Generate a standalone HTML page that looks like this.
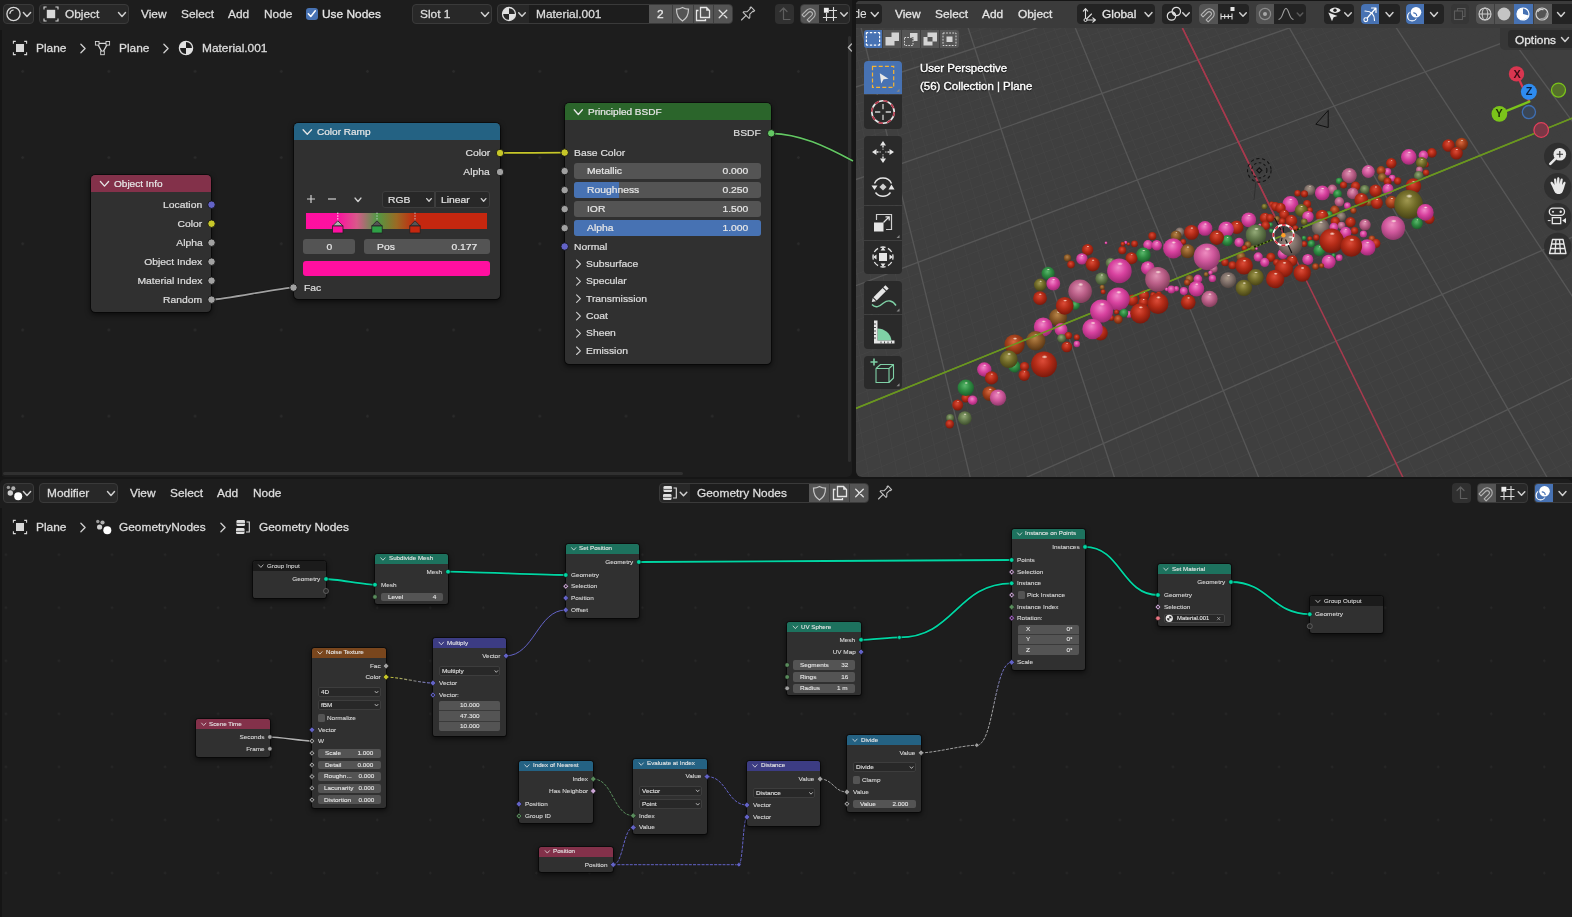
<!DOCTYPE html><html><head><meta charset="utf-8"><title>Blender</title><style>
*{box-sizing:border-box;margin:0;padding:0}
html,body{width:1572px;height:917px;overflow:hidden;background:#161616}
body{font-family:"Liberation Sans",sans-serif;font-size:12px;color:#e0e0e0;position:relative}
.abs{position:absolute}
.t{position:absolute;white-space:nowrap;line-height:1}
.btn{position:absolute;background:#282828;border:1px solid #3a3a3a;border-radius:4px}
.btnv{position:absolute;background:#1d1d1d;border-radius:4px}
.node{position:absolute;background:#303030;border-radius:4px;box-shadow:0 2px 5px 1px rgba(0,0,0,.55), 0 0 0 1px rgba(0,0,0,.45)}
.nh{position:absolute;left:0;top:0;right:0;border-radius:4px 4px 0 0}
.fld{position:absolute;background:#545454;border-radius:3px;overflow:hidden}
.dd{position:absolute;background:#282828;border:1px solid #3d3d3d;border-radius:3px}
svg{position:absolute;overflow:visible}
</style></head><body><div id="w" style="position:absolute;left:0;top:0;width:1572px;height:917px;will-change:transform">
<div class="abs" style="left:0.0px;top:0.0px;width:852.0px;height:477.0px;background:#1d1d1d;border-radius:0 0 5px 5px"></div>
<div class="abs" style="left:0.0px;top:479.0px;width:1572.0px;height:438.0px;background:#1d1d1d;border-radius:5px 5px 0 0"></div>
<div class="abs" style="left:0px;top:28px;width:847px;height:442px;background-image:radial-gradient(circle at 1.5px 1.5px,#2a2a2a 1.0px,transparent 1.6px);background-size:86.2px 86.2px;background-position:107.4px 128.1px"></div>
<div class="abs" style="left:0.0px;top:30.0px;width:1.5px;height:447.0px;background:#151515;"></div>
<div class="abs" style="left:848.0px;top:36.0px;width:3.0px;height:426.0px;background:#2e2e2e;border-radius:2px"></div>
<div class="abs" style="left:3.0px;top:472.0px;width:680.0px;height:3.0px;background:#303030;border-radius:2px"></div>
<div class="abs" style="left:2.5px;top:4.3px;width:31.5px;height:19.3px;background:#282828;border:1px solid #3a3a3a;border-radius:4px"></div>
<svg style="left:0;top:0" width="1" height="1"><circle cx="13.5" cy="14" r="6.6" fill="none" stroke="#d8d8d8" stroke-width="1.3"/><path d="M9.9 13.3 A4.0 4.0 0 0 1 13.2 10.0" fill="none" stroke="#d8d8d8" stroke-width="1.2" stroke-linecap="round"/></svg>
<svg style="left:0;top:0" width="1" height="1"><path d="M23.4 12.5 L27.0 16.5 L30.6 12.5" fill="none" stroke="#d0d0d0" stroke-width="1.45" stroke-linecap="round" stroke-linejoin="round"/></svg>
<div class="abs" style="left:39.0px;top:4.3px;width:90.0px;height:19.3px;background:#282828;border:1px solid #3a3a3a;border-radius:4px"></div>
<svg style="left:0;top:0" width="1" height="1"><path d="M44.0 9.6 L44.0 7.0 L46.6 7.0 M44.0 18.4 L44.0 21.0 L46.6 21.0 M58.0 9.6 L58.0 7.0 L55.4 7.0 M58.0 18.4 L58.0 21.0 L55.4 21.0 " fill="none" stroke="#d8d8d8" stroke-width="1.1"/><rect x="46.8" y="9.8" width="8.4" height="8.4" fill="#d8d8d8"/></svg>
<div class="t" style="left:65.0px;top:9.07px;font-size:10.71px;color:#dddddd;-webkit-text-stroke:0.27px;transform:scaleX(1.111);transform-origin:left center;">Object</div>
<svg style="left:0;top:0" width="1" height="1"><path d="M118.5 12.5 L122.0 16.5 L125.5 12.5" fill="none" stroke="#d0d0d0" stroke-width="1.45" stroke-linecap="round" stroke-linejoin="round"/></svg>
<div class="t" style="left:141.0px;top:9.07px;font-size:10.71px;color:#dddddd;-webkit-text-stroke:0.27px;transform:scaleX(1.111);transform-origin:left center;">View</div>
<div class="t" style="left:181.0px;top:9.07px;font-size:10.71px;color:#dddddd;-webkit-text-stroke:0.27px;transform:scaleX(1.111);transform-origin:left center;">Select</div>
<div class="t" style="left:228.0px;top:9.07px;font-size:10.71px;color:#dddddd;-webkit-text-stroke:0.27px;transform:scaleX(1.111);transform-origin:left center;">Add</div>
<div class="t" style="left:264.0px;top:9.07px;font-size:10.71px;color:#dddddd;-webkit-text-stroke:0.27px;transform:scaleX(1.111);transform-origin:left center;">Node</div>
<div class="abs" style="left:305.5px;top:7.5px;width:12.5px;height:12.5px;background:#4772b3;border-radius:3px"></div>
<svg style="left:0;top:0" width="1" height="1"><path d="M308.3 13.8 L310.8 16.5 L315.3 10.8" fill="none" stroke="#fff" stroke-width="1.5" stroke-linecap="round" stroke-linejoin="round"/></svg>
<div class="t" style="left:322.0px;top:9.07px;font-size:10.71px;color:#e6e6e6;-webkit-text-stroke:0.27px;transform:scaleX(1.111);transform-origin:left center;">Use Nodes</div>
<div class="abs" style="left:412.0px;top:4.3px;width:80.0px;height:19.3px;background:#282828;border:1px solid #3a3a3a;border-radius:4px"></div>
<div class="t" style="left:420.0px;top:9.07px;font-size:10.71px;color:#dddddd;-webkit-text-stroke:0.27px;transform:scaleX(1.111);transform-origin:left center;">Slot 1</div>
<svg style="left:0;top:0" width="1" height="1"><path d="M481.4 12.5 L485.0 16.5 L488.6 12.5" fill="none" stroke="#d0d0d0" stroke-width="1.45" stroke-linecap="round" stroke-linejoin="round"/></svg>
<div class="abs" style="left:497.0px;top:4.3px;width:236.0px;height:19.3px;background:#282828;border:1px solid #3a3a3a;border-radius:4px"></div>
<svg style="left:0;top:0" width="1" height="1"><circle cx="509" cy="14" r="6.5" fill="#282828" stroke="#e0e0e0" stroke-width="1.3"/><path d="M509 14 L509 7.5 A6.5 6.5 0 0 0 502.5 14 Z" fill="#e0e0e0"/><path d="M509 14 L509 20.5 A6.5 6.5 0 0 0 515.5 14 Z" fill="#e0e0e0"/></svg>
<svg style="left:0;top:0" width="1" height="1"><path d="M518.7 12.7 L522.0 16.3 L525.3 12.7" fill="none" stroke="#d0d0d0" stroke-width="1.45" stroke-linecap="round" stroke-linejoin="round"/></svg>
<div class="abs" style="left:529.0px;top:5.3px;width:120.0px;height:17.3px;background:#1d1d1d;"></div>
<div class="t" style="left:536.0px;top:9.07px;font-size:10.71px;color:#dddddd;-webkit-text-stroke:0.27px;transform:scaleX(1.111);transform-origin:left center;">Material.001</div>
<div class="abs" style="left:649.0px;top:5.3px;width:83.0px;height:17.3px;background:#545454;border-radius:0 3px 3px 0"></div>
<div class="abs" style="left:672.0px;top:5.3px;width:1.0px;height:17.3px;background:#3e3e3e;"></div>
<div class="abs" style="left:692.5px;top:5.3px;width:1.0px;height:17.3px;background:#3e3e3e;"></div>
<div class="abs" style="left:712.5px;top:5.3px;width:1.0px;height:17.3px;background:#3e3e3e;"></div>
<div class="t" style="left:656.5px;top:9.07px;font-size:10.71px;color:#e6e6e6;-webkit-text-stroke:0.27px;transform:scaleX(1.111);transform-origin:left center;">2</div>
<svg style="left:0;top:0" width="1" height="1"><path d="M682.5 7.5 C685.0 9 687.0 9.2 688.5 9.2 C688.5 15 686.5 18.5 682.5 21 C678.5 18.5 676.5 15 676.5 9.2 C678.0 9.2 680.0 9 682.5 7.5 Z" fill="none" stroke="#c8c8c8" stroke-width="1.2"/></svg>
<svg style="left:0;top:0" width="1" height="1"><path d="M700.5 7.5 L706.5 7.5 L709.5 10.5 L709.5 17.5 L700.5 17.5 Z" fill="none" stroke="#e6e6e6" stroke-width="1.3"/><path d="M706.2 7.5 L706.2 10.8 L709.5 10.8 Z" fill="#e6e6e6"/><path d="M698.5 10.5 L696.5 10.5 L696.5 20.5 L705.5 20.5 L705.5 19" fill="none" stroke="#e6e6e6" stroke-width="1.3"/></svg>
<svg style="left:0;top:0" width="1" height="1"><path d="M719.2 10.2 L726.8 17.8 M726.8 10.2 L719.2 17.8" stroke="#e0e0e0" stroke-width="1.3" stroke-linecap="round"/></svg>
<svg style="left:0;top:0" width="1" height="1"><g transform="translate(747.5 14) rotate(45)"><path d="M-2.6 -7.5 L2.6 -7.5 L2.6 -6 L1.8 -6 L1.8 -1.5 L4.2 1 L4.2 2 L-4.2 2 L-4.2 1 L-1.8 -1.5 L-1.8 -6 L-2.6 -6 Z" fill="none" stroke="#c0c0c0" stroke-width="1.1" stroke-linejoin="round"/><path d="M0 2 L0 8.5" stroke="#c0c0c0" stroke-width="1.1" stroke-linecap="round"/></g></svg>
<div class="abs" style="left:774.5px;top:4.3px;width:19.5px;height:19.3px;background:#303030;border-radius:4px"></div>
<svg style="left:0;top:0" width="1" height="1"><path d="M780 11.5 L783.5 8 L787 11.5 M783.5 8 L783.5 19.5 L790 19.5" fill="none" stroke="#5e5e5e" stroke-width="1.2" stroke-linecap="round" stroke-linejoin="round"/></svg>
<div class="abs" style="left:799.5px;top:4.3px;width:50.5px;height:19.3px;background:#282828;border:1px solid #3a3a3a;border-radius:4px"></div>
<div class="abs" style="left:800.5px;top:5.3px;width:18.5px;height:17.3px;background:#545454;border-radius:3px 0 0 3px"></div>
<svg style="left:0;top:0" width="1" height="1"><g transform="translate(809.5 14.5) rotate(45)"><path d="M-5 5.5 L-5 -1 A5 5 0 0 1 5 -1 L5 5.5 L2.2 5.5 L2.2 -1 A2.2 2.2 0 0 0 -2.2 -1 L-2.2 5.5 Z" fill="none" stroke="#b4b4b4" stroke-width="1.1" stroke-linejoin="round"/></g></svg>
<svg style="left:0;top:0" width="1" height="1"><path d="M826.5 13.0 L826.5 21.0 M833.5 6.9 L833.5 21.0 M829 10.5 L837 10.5 M822.9 17.5 L837 17.5" stroke="#dcdcdc" stroke-width="1.1"/><rect x="823.9" y="7.8" width="4.9" height="4.9" fill="#ececec"/></svg>
<svg style="left:0;top:0" width="1" height="1"><path d="M840.7 12.7 L844.0 16.3 L847.3 12.7" fill="none" stroke="#d0d0d0" stroke-width="1.45" stroke-linecap="round" stroke-linejoin="round"/></svg>
<svg style="left:0;top:0" width="1" height="1"><path d="M13.4 43.8 L13.4 41.4 L15.8 41.4 M13.4 52.2 L13.4 54.6 L15.8 54.6 M26.6 43.8 L26.6 41.4 L24.2 41.4 M26.6 52.2 L26.6 54.6 L24.2 54.6 " fill="none" stroke="#d8d8d8" stroke-width="1.1"/><rect x="16.0" y="44.0" width="8.0" height="8.0" fill="#d8d8d8"/></svg>
<div class="t" style="left:36.0px;top:42.97px;font-size:10.71px;color:#dddddd;-webkit-text-stroke:0.27px;transform:scaleX(1.111);transform-origin:left center;">Plane</div>
<svg style="left:0;top:0" width="1" height="1"><path d="M80.9 44.2 L85.1 48.5 L80.9 52.8" fill="none" stroke="#d0d0d0" stroke-width="1.3" stroke-linecap="round" stroke-linejoin="round"/></svg>
<svg style="left:0;top:0" width="1" height="1"><path d="M97.2 43.3 L107.8 43.3 L102.5 52.9 Z" fill="none" stroke="#d8d8d8" stroke-width="1.2"/><rect x="95.4" y="41.5" width="3.6" height="3.6" fill="#1d1d1d" stroke="#d8d8d8" stroke-width="0.9"/><rect x="106.0" y="41.5" width="3.6" height="3.6" fill="#1d1d1d" stroke="#d8d8d8" stroke-width="0.9"/><rect x="100.7" y="51.1" width="3.6" height="3.6" fill="#1d1d1d" stroke="#d8d8d8" stroke-width="0.9"/></svg>
<div class="t" style="left:119.0px;top:42.97px;font-size:10.71px;color:#dddddd;-webkit-text-stroke:0.27px;transform:scaleX(1.111);transform-origin:left center;">Plane</div>
<svg style="left:0;top:0" width="1" height="1"><path d="M163.9 44.2 L168.1 48.5 L163.9 52.8" fill="none" stroke="#d0d0d0" stroke-width="1.3" stroke-linecap="round" stroke-linejoin="round"/></svg>
<svg style="left:0;top:0" width="1" height="1"><circle cx="186" cy="48" r="6.6" fill="#1d1d1d" stroke="#e0e0e0" stroke-width="1.3"/><path d="M186 48 L186 41.4 A6.6 6.6 0 0 0 179.4 48 Z" fill="#e0e0e0"/><path d="M186 48 L186 54.6 A6.6 6.6 0 0 0 192.6 48 Z" fill="#e0e0e0"/></svg>
<div class="t" style="left:202.0px;top:42.97px;font-size:10.71px;color:#dddddd;-webkit-text-stroke:0.27px;transform:scaleX(1.111);transform-origin:left center;">Material.001</div>
<svg style="left:0;top:0" width="1" height="1"><path d="M851.5 44 L848.3 47.5 L851.5 51" fill="none" stroke="#b8b8b8" stroke-width="1.2" stroke-linecap="round" stroke-linejoin="round"/></svg>
<svg style="left:0;top:0" width="1" height="1"><path d="M211.5 299.6 C223.5 299.6 281.5 287.6 293.5 287.6" fill="none" stroke="#111" stroke-width="3.0999999999999996" opacity="0.55"/><path d="M211.5 299.6 C223.5 299.6 281.5 287.6 293.5 287.6" fill="none" stroke="#a1a1a1" stroke-width="1.7"/></svg>
<svg style="left:0;top:0" width="1" height="1"><path d="M500.0 153.0 C510.0 153.0 555.0 152.6 565.0 152.6" fill="none" stroke="#111" stroke-width="3.0999999999999996" opacity="0.55"/><path d="M500.0 153.0 C510.0 153.0 555.0 152.6 565.0 152.6" fill="none" stroke="#c7c729" stroke-width="1.7"/></svg>
<svg style="left:0;top:0" width="1" height="1"><path d="M771.3 133.3 C800 134 825 146 853 161" fill="none" stroke="#111" stroke-width="3" opacity=".5"/><path d="M771.3 133.3 C800 134 825 146 853 161" fill="none" stroke="#63c763" stroke-width="1.7"/></svg>
<div class="node" style="left:91.0px;top:175.0px;width:120.0px;height:137.0px;border-radius:4.2px"><div class="nh" style="height:17.0px;background:#83314a;border-radius:4.2px 4.2px 0 0"></div></div>
<svg style="left:0;top:0" width="1" height="1"><path d="M100.4 181.5 L104.5 186.1 L108.6 181.5" fill="none" stroke="#e6e6e6" stroke-width="1.3" stroke-linecap="round" stroke-linejoin="round"/></svg>
<div class="t" style="left:114.0px;top:179.79px;font-size:9.04px;color:#e6e6e6;-webkit-text-stroke:0.21px;transform:scaleX(1.111);transform-origin:left center;">Object Info</div>
<div class="t" style="right:1369.7px;top:200.85px;font-size:9.31px;color:#dddddd;-webkit-text-stroke:0.22px;transform:scaleX(1.111);transform-origin:right center;">Location</div>
<svg style="left:0;top:0" width="1" height="1"><circle cx="211.5" cy="204.7" r="3.75" fill="#6363c7" stroke="#141414" stroke-width="0.9"/></svg>
<div class="t" style="right:1369.7px;top:219.85px;font-size:9.31px;color:#dddddd;-webkit-text-stroke:0.22px;transform:scaleX(1.111);transform-origin:right center;">Color</div>
<svg style="left:0;top:0" width="1" height="1"><circle cx="211.5" cy="223.7" r="3.75" fill="#c7c729" stroke="#141414" stroke-width="0.9"/></svg>
<div class="t" style="right:1369.7px;top:238.85px;font-size:9.31px;color:#dddddd;-webkit-text-stroke:0.22px;transform:scaleX(1.111);transform-origin:right center;">Alpha</div>
<svg style="left:0;top:0" width="1" height="1"><circle cx="211.5" cy="242.7" r="3.75" fill="#a1a1a1" stroke="#141414" stroke-width="0.9"/></svg>
<div class="t" style="right:1369.7px;top:257.85px;font-size:9.31px;color:#dddddd;-webkit-text-stroke:0.22px;transform:scaleX(1.111);transform-origin:right center;">Object Index</div>
<svg style="left:0;top:0" width="1" height="1"><circle cx="211.5" cy="261.7" r="3.75" fill="#a1a1a1" stroke="#141414" stroke-width="0.9"/></svg>
<div class="t" style="right:1369.7px;top:276.85px;font-size:9.31px;color:#dddddd;-webkit-text-stroke:0.22px;transform:scaleX(1.111);transform-origin:right center;">Material Index</div>
<svg style="left:0;top:0" width="1" height="1"><circle cx="211.5" cy="280.7" r="3.75" fill="#a1a1a1" stroke="#141414" stroke-width="0.9"/></svg>
<div class="t" style="right:1369.7px;top:295.85px;font-size:9.31px;color:#dddddd;-webkit-text-stroke:0.22px;transform:scaleX(1.111);transform-origin:right center;">Random</div>
<svg style="left:0;top:0" width="1" height="1"><circle cx="211.5" cy="299.7" r="3.75" fill="#a1a1a1" stroke="#141414" stroke-width="0.9"/></svg>
<div class="node" style="left:293.5px;top:123.0px;width:206.5px;height:176.3px;border-radius:4.3px"><div class="nh" style="height:17.4px;background:#246283;border-radius:4.3px 4.3px 0 0"></div></div>
<svg style="left:0;top:0" width="1" height="1"><path d="M303.1 129.7 L307.3 134.3 L311.5 129.7" fill="none" stroke="#e6e6e6" stroke-width="1.3305882352941176" stroke-linecap="round" stroke-linejoin="round"/></svg>
<div class="t" style="left:317.0px;top:127.99px;font-size:9.04px;color:#e6e6e6;-webkit-text-stroke:0.21px;transform:scaleX(1.111);transform-origin:left center;">Color Ramp</div>
<div class="t" style="right:1082.0px;top:149.15px;font-size:9.31px;color:#dddddd;-webkit-text-stroke:0.22px;transform:scaleX(1.111);transform-origin:right center;">Color</div>
<svg style="left:0;top:0" width="1" height="1"><circle cx="500.0" cy="153.0" r="3.75" fill="#c7c729" stroke="#141414" stroke-width="0.9"/></svg>
<div class="t" style="right:1082.0px;top:168.15px;font-size:9.31px;color:#dddddd;-webkit-text-stroke:0.22px;transform:scaleX(1.111);transform-origin:right center;">Alpha</div>
<svg style="left:0;top:0" width="1" height="1"><circle cx="500.0" cy="172.0" r="3.75" fill="#a1a1a1" stroke="#141414" stroke-width="0.9"/></svg>
<svg style="left:0;top:0" width="1" height="1"><path d="M307 199 L315 199 M311 195 L311 203" stroke="#d0d0d0" stroke-width="1.2"/><path d="M328 199 L336 199" stroke="#d0d0d0" stroke-width="1.2"/></svg>
<svg style="left:0;top:0" width="1" height="1"><path d="M355.1 198.1 L358.0 201.5 L360.9 198.1" fill="none" stroke="#d0d0d0" stroke-width="1.45" stroke-linecap="round" stroke-linejoin="round"/></svg>
<div class="dd" style="left:381.7px;top:191.0px;width:53.7px;height:17.0px;border-radius:3px;border-radius:3px 0 0 3px"></div>
<div class="t" style="left:387.7px;top:195.65px;font-size:9.31px;color:#e0e0e0;-webkit-text-stroke:0.22px;transform:scaleX(1.111);transform-origin:left center;">RGB</div>
<svg style="left:0;top:0" width="1" height="1"><path d="M426.7 198.6 L429.0 201.2 L431.3 198.6" fill="none" stroke="#d0d0d0" stroke-width="1.3307142857142857" stroke-linecap="round" stroke-linejoin="round"/></svg>
<div class="dd" style="left:434.9px;top:191.0px;width:55.1px;height:17.0px;border-radius:3px;border-radius:0 3px 3px 0"></div>
<div class="t" style="left:440.9px;top:195.65px;font-size:9.31px;color:#e0e0e0;-webkit-text-stroke:0.22px;transform:scaleX(1.111);transform-origin:left center;">Linear</div>
<svg style="left:0;top:0" width="1" height="1"><path d="M481.3 198.6 L483.6 201.2 L485.9 198.6" fill="none" stroke="#d0d0d0" stroke-width="1.3307142857142857" stroke-linecap="round" stroke-linejoin="round"/></svg>
<div class="abs" style="left:305.6px;top:212.6px;width:181.9px;height:16.4px;background:linear-gradient(90deg,#ff0fa0 0%,#fd11a0 17.7%,#d9588a 28%,#4f9a44 39.3%,#9a6a24 50%,#c5270f 60.2%,#c5270f 100%)"></div>
<svg style="left:0;top:0" width="1" height="1"><path d="M337.8 212.6 L337.8 221" stroke="#fff" stroke-width="0.9" stroke-dasharray="1.5 1.2"/><path d="M332.6 226 L337.8 220.8 L343.0 226 Z" fill="#b0b0b0" stroke="#222" stroke-width="0.8"/><rect x="332.6" y="226" width="10.4" height="7" fill="#ff10a0" stroke="#222" stroke-width="0.8"/></svg>
<svg style="left:0;top:0" width="1" height="1"><path d="M377 212.6 L377 221" stroke="#ccc" stroke-width="0.9" stroke-dasharray="1.5 1.2"/><path d="M371.8 226 L377 220.8 L382.2 226 Z" fill="#555" stroke="#222" stroke-width="0.8"/><rect x="371.8" y="226" width="10.4" height="7" fill="#2fa046" stroke="#222" stroke-width="0.8"/></svg>
<svg style="left:0;top:0" width="1" height="1"><path d="M415 212.6 L415 221" stroke="#ccc" stroke-width="0.9" stroke-dasharray="1.5 1.2"/><path d="M409.8 226 L415 220.8 L420.2 226 Z" fill="#555" stroke="#222" stroke-width="0.8"/><rect x="409.8" y="226" width="10.4" height="7" fill="#c5270f" stroke="#222" stroke-width="0.8"/></svg>
<div class="fld" style="left:302.8px;top:239.0px;width:52.6px;height:15.0px;border-radius:3px"></div>
<div class="t" style="left:302.8px;width:52.6px;text-align:center;top:242.65px;font-size:9.31px;color:#e6e6e6;-webkit-text-stroke:0.22px;transform:scaleX(1.111);transform-origin:center center">0</div>
<div class="fld" style="left:363.5px;top:239.0px;width:126.8px;height:15.0px;border-radius:3px"></div>
<div class="t" style="left:376.5px;top:242.65px;font-size:9.31px;color:#e6e6e6;-webkit-text-stroke:0.22px;transform:scaleX(1.111);transform-origin:left center;">Pos</div>
<div class="t" style="right:1094.7px;top:242.65px;font-size:9.31px;color:#e6e6e6;-webkit-text-stroke:0.22px;transform:scaleX(1.111);transform-origin:right center;">0.177</div>
<div class="abs" style="left:302.8px;top:260.7px;width:187.5px;height:15.1px;background:#ff0fa0;border-radius:3px"></div>
<div class="t" style="left:303.5px;top:283.75px;font-size:9.31px;color:#dddddd;-webkit-text-stroke:0.22px;transform:scaleX(1.111);transform-origin:left center;">Fac</div>
<svg style="left:0;top:0" width="1" height="1"><circle cx="293.5" cy="287.6" r="3.75" fill="#a1a1a1" stroke="#141414" stroke-width="0.9"/></svg>
<div class="node" style="left:564.7px;top:103.3px;width:206.4px;height:260.5px;border-radius:4.3px"><div class="nh" style="height:17.1px;background:#2b652b;border-radius:4.3px 4.3px 0 0"></div></div>
<svg style="left:0;top:0" width="1" height="1"><path d="M574.2 109.8 L578.3 114.5 L582.4 109.8" fill="none" stroke="#e6e6e6" stroke-width="1.3076470588235294" stroke-linecap="round" stroke-linejoin="round"/></svg>
<div class="t" style="left:587.8px;top:108.14px;font-size:9.04px;color:#e6e6e6;-webkit-text-stroke:0.21px;transform:scaleX(1.111);transform-origin:left center;">Principled BSDF</div>
<div class="t" style="right:811.0px;top:129.45px;font-size:9.31px;color:#dddddd;-webkit-text-stroke:0.22px;transform:scaleX(1.111);transform-origin:right center;">BSDF</div>
<svg style="left:0;top:0" width="1" height="1"><circle cx="771.2" cy="133.3" r="3.75" fill="#63c763" stroke="#141414" stroke-width="0.9"/></svg>
<div class="t" style="left:574.0px;top:148.75px;font-size:9.31px;color:#dddddd;-webkit-text-stroke:0.22px;transform:scaleX(1.111);transform-origin:left center;">Base Color</div>
<svg style="left:0;top:0" width="1" height="1"><circle cx="564.7" cy="152.6" r="3.75" fill="#c7c729" stroke="#141414" stroke-width="0.9"/></svg>
<div class="fld" style="left:573.8px;top:163.2px;width:187.2px;height:15.8px;border-radius:3px"></div>
<div class="t" style="left:586.8px;top:167.25px;font-size:9.31px;color:#e6e6e6;-webkit-text-stroke:0.22px;transform:scaleX(1.111);transform-origin:left center;">Metallic</div>
<div class="t" style="right:824.0px;top:167.25px;font-size:9.31px;color:#e6e6e6;-webkit-text-stroke:0.22px;transform:scaleX(1.111);transform-origin:right center;">0.000</div>
<svg style="left:0;top:0" width="1" height="1"><circle cx="564.7" cy="171.1" r="3.75" fill="#a1a1a1" stroke="#141414" stroke-width="0.9"/></svg>
<div class="fld" style="left:573.8px;top:182.2px;width:187.2px;height:15.8px;border-radius:3px"><div class="abs" style="left:0;top:0;bottom:0;width:45.3px;background:#4772b3"></div></div>
<div class="t" style="left:586.8px;top:186.25px;font-size:9.31px;color:#e6e6e6;-webkit-text-stroke:0.22px;transform:scaleX(1.111);transform-origin:left center;">Roughness</div>
<div class="t" style="right:824.0px;top:186.25px;font-size:9.31px;color:#e6e6e6;-webkit-text-stroke:0.22px;transform:scaleX(1.111);transform-origin:right center;">0.250</div>
<svg style="left:0;top:0" width="1" height="1"><circle cx="564.7" cy="190.1" r="3.75" fill="#a1a1a1" stroke="#141414" stroke-width="0.9"/></svg>
<div class="fld" style="left:573.8px;top:201.2px;width:187.2px;height:15.8px;border-radius:3px"></div>
<div class="t" style="left:586.8px;top:205.25px;font-size:9.31px;color:#e6e6e6;-webkit-text-stroke:0.22px;transform:scaleX(1.111);transform-origin:left center;">IOR</div>
<div class="t" style="right:824.0px;top:205.25px;font-size:9.31px;color:#e6e6e6;-webkit-text-stroke:0.22px;transform:scaleX(1.111);transform-origin:right center;">1.500</div>
<svg style="left:0;top:0" width="1" height="1"><circle cx="564.7" cy="209.1" r="3.75" fill="#a1a1a1" stroke="#141414" stroke-width="0.9"/></svg>
<div class="fld" style="left:573.8px;top:220.2px;width:187.2px;height:15.8px;border-radius:3px"><div class="abs" style="left:0;top:0;bottom:0;width:187.2px;background:#4772b3"></div></div>
<div class="t" style="left:586.8px;top:224.25px;font-size:9.31px;color:#e6e6e6;-webkit-text-stroke:0.22px;transform:scaleX(1.111);transform-origin:left center;">Alpha</div>
<div class="t" style="right:824.0px;top:224.25px;font-size:9.31px;color:#e6e6e6;-webkit-text-stroke:0.22px;transform:scaleX(1.111);transform-origin:right center;">1.000</div>
<svg style="left:0;top:0" width="1" height="1"><circle cx="564.7" cy="228.1" r="3.75" fill="#a1a1a1" stroke="#141414" stroke-width="0.9"/></svg>
<div class="t" style="left:574.0px;top:242.65px;font-size:9.31px;color:#dddddd;-webkit-text-stroke:0.22px;transform:scaleX(1.111);transform-origin:left center;">Normal</div>
<svg style="left:0;top:0" width="1" height="1"><circle cx="564.7" cy="246.5" r="3.75" fill="#6363c7" stroke="#141414" stroke-width="0.9"/></svg>
<svg style="left:0;top:0" width="1" height="1"><path d="M576.6 260.2 L580.4 264.0 L576.6 267.8" fill="none" stroke="#d0d0d0" stroke-width="1.1" stroke-linecap="round" stroke-linejoin="round"/></svg>
<div class="t" style="left:586.0px;top:259.85px;font-size:9.31px;color:#dddddd;-webkit-text-stroke:0.22px;transform:scaleX(1.111);transform-origin:left center;">Subsurface</div>
<svg style="left:0;top:0" width="1" height="1"><path d="M576.6 277.6 L580.4 281.4 L576.6 285.1" fill="none" stroke="#d0d0d0" stroke-width="1.1" stroke-linecap="round" stroke-linejoin="round"/></svg>
<div class="t" style="left:586.0px;top:277.20px;font-size:9.31px;color:#dddddd;-webkit-text-stroke:0.22px;transform:scaleX(1.111);transform-origin:left center;">Specular</div>
<svg style="left:0;top:0" width="1" height="1"><path d="M576.6 294.9 L580.4 298.7 L576.6 302.4" fill="none" stroke="#d0d0d0" stroke-width="1.1" stroke-linecap="round" stroke-linejoin="round"/></svg>
<div class="t" style="left:586.0px;top:294.55px;font-size:9.31px;color:#dddddd;-webkit-text-stroke:0.22px;transform:scaleX(1.111);transform-origin:left center;">Transmission</div>
<svg style="left:0;top:0" width="1" height="1"><path d="M576.6 312.3 L580.4 316.1 L576.6 319.8" fill="none" stroke="#d0d0d0" stroke-width="1.1" stroke-linecap="round" stroke-linejoin="round"/></svg>
<div class="t" style="left:586.0px;top:311.90px;font-size:9.31px;color:#dddddd;-webkit-text-stroke:0.22px;transform:scaleX(1.111);transform-origin:left center;">Coat</div>
<svg style="left:0;top:0" width="1" height="1"><path d="M576.6 329.7 L580.4 333.4 L576.6 337.2" fill="none" stroke="#d0d0d0" stroke-width="1.1" stroke-linecap="round" stroke-linejoin="round"/></svg>
<div class="t" style="left:586.0px;top:329.25px;font-size:9.31px;color:#dddddd;-webkit-text-stroke:0.22px;transform:scaleX(1.111);transform-origin:left center;">Sheen</div>
<svg style="left:0;top:0" width="1" height="1"><path d="M576.6 347.0 L580.4 350.8 L576.6 354.5" fill="none" stroke="#d0d0d0" stroke-width="1.1" stroke-linecap="round" stroke-linejoin="round"/></svg>
<div class="t" style="left:586.0px;top:346.60px;font-size:9.31px;color:#dddddd;-webkit-text-stroke:0.22px;transform:scaleX(1.111);transform-origin:left center;">Emission</div>
<div class="abs" style="left:856px;top:1px;width:716px;height:476px;background:#3f3f3f;border-radius:4px 0 0 6px;overflow:hidden">
<svg style="left:0;top:0" width="716" height="476" viewBox="856 1 716 476">
<defs>
<radialGradient id="sr" cx="0.45" cy="0.4" r="0.68" fx="0.45" fy="0.36"><stop offset="0" stop-color="#dc4c38"/><stop offset="0.45" stop-color="#b32b17"/><stop offset="1" stop-color="#6c1509"/></radialGradient>
<radialGradient id="sp" cx="0.45" cy="0.4" r="0.68" fx="0.45" fy="0.36"><stop offset="0" stop-color="#f088c8"/><stop offset="0.45" stop-color="#d8429f"/><stop offset="1" stop-color="#902268"/></radialGradient>
<radialGradient id="sg" cx="0.45" cy="0.4" r="0.68" fx="0.45" fy="0.36"><stop offset="0" stop-color="#5ab86c"/><stop offset="0.45" stop-color="#2f8c42"/><stop offset="1" stop-color="#175426"/></radialGradient>
<radialGradient id="so" cx="0.45" cy="0.4" r="0.68" fx="0.45" fy="0.36"><stop offset="0" stop-color="#b88448"/><stop offset="0.45" stop-color="#8a5a28"/><stop offset="1" stop-color="#4c2e10"/></radialGradient>
<radialGradient id="sk" cx="0.45" cy="0.4" r="0.68" fx="0.45" fy="0.36"><stop offset="0" stop-color="#e094b4"/><stop offset="0.45" stop-color="#bb5f88"/><stop offset="1" stop-color="#74344f"/></radialGradient>
<radialGradient id="sq" cx="0.45" cy="0.4" r="0.68" fx="0.45" fy="0.36"><stop offset="0" stop-color="#ee8cc0"/><stop offset="0.45" stop-color="#d0589c"/><stop offset="1" stop-color="#823060"/></radialGradient>
<radialGradient id="sy" cx="0.45" cy="0.4" r="0.68" fx="0.45" fy="0.36"><stop offset="0" stop-color="#a09850"/><stop offset="0.45" stop-color="#716b28"/><stop offset="1" stop-color="#3e3a12"/></radialGradient>
<radialGradient id="sm" cx="0.45" cy="0.4" r="0.68" fx="0.45" fy="0.36"><stop offset="0" stop-color="#a89888"/><stop offset="0.45" stop-color="#80706a"/><stop offset="1" stop-color="#463c38"/></radialGradient>
<radialGradient id="se" cx="0.45" cy="0.4" r="0.68" fx="0.45" fy="0.36"><stop offset="0" stop-color="#94aa78"/><stop offset="0.45" stop-color="#647a4c"/><stop offset="1" stop-color="#344226"/></radialGradient>
<radialGradient id="sb" cx="0.45" cy="0.4" r="0.68" fx="0.45" fy="0.36"><stop offset="0" stop-color="#d86a40"/><stop offset="0.45" stop-color="#a4401c"/><stop offset="1" stop-color="#5c2008"/></radialGradient>
<radialGradient id="hl" cx="0.5" cy="0.5" r="0.5"><stop offset="0" stop-color="#fff0e0" stop-opacity="0.85"/><stop offset="0.5" stop-color="#fff0e0" stop-opacity="0.5"/><stop offset="1" stop-color="#fff" stop-opacity="0"/></radialGradient>
<linearGradient id="gfade" gradientUnits="userSpaceOnUse" x1="1275" y1="0" x2="1419" y2="-108"><stop offset="0" stop-color="#fff"/><stop offset="1" stop-color="#000"/></linearGradient><mask id="gmask" maskUnits="userSpaceOnUse" x="856" y="0" width="716" height="477"><rect x="856" y="0" width="716" height="477" fill="url(#gfade)"/></mask>
</defs>
<path d="M38.4 -238.2 L-5628.1 11239.0 M26.5 -231.5 L1596.9 -558.4 M47.9 -240.2 L-5524.6 11239.1 M24.2 -226.8 L1600.2 -556.2 M57.3 -242.1 L-5421.1 11239.2 M21.8 -222.0 L1603.5 -554.0 M66.7 -244.1 L-5317.6 11239.4 M19.3 -217.2 L1606.8 -551.7 M76.1 -246.0 L-5214.0 11239.5 M16.9 -212.3 L1610.1 -549.5 M85.4 -247.9 L-5110.5 11239.6 M14.4 -207.4 L1613.5 -547.2 M94.7 -249.9 L-5007.0 11239.7 M11.9 -202.4 L1616.9 -544.9 M104.0 -251.8 L-4903.5 11239.9 M9.4 -197.4 L1620.3 -542.6 M113.2 -253.7 L-4799.9 11240.0 M6.9 -192.4 L1623.7 -540.3 M131.6 -257.5 L-4592.9 11240.2 M1.7 -182.1 L1630.6 -535.7 M140.7 -259.4 L-4489.4 11240.3 M-0.9 -176.9 L1634.1 -533.3 M149.8 -261.3 L-4385.8 11240.5 M-3.5 -171.6 L1637.6 -530.9 M158.9 -263.2 L-4282.3 11240.6 M-6.2 -166.3 L1641.2 -528.5 M167.9 -265.0 L-4178.8 11240.7 M-8.9 -161.0 L1644.7 -526.1 M176.9 -266.9 L-4075.3 11240.8 M-11.6 -155.6 L1648.3 -523.7 M185.8 -268.8 L-3971.8 11240.9 M-14.3 -150.1 L1651.9 -521.3 M194.8 -270.6 L-3868.2 11241.1 M-17.1 -144.6 L1655.5 -518.8 M203.6 -272.5 L-3764.7 11241.2 M-19.9 -139.0 L1659.2 -516.4 M221.3 -276.1 L-3557.7 11241.4 M-25.6 -127.7 L1666.6 -511.4 M230.1 -277.9 L-3454.1 11241.6 M-28.5 -122.0 L1670.3 -508.9 M238.9 -279.8 L-3350.6 11241.7 M-31.4 -116.2 L1674.0 -506.3 M247.6 -281.6 L-3247.1 11241.8 M-34.3 -110.3 L1677.8 -503.8 M256.3 -283.4 L-3143.6 11241.9 M-37.3 -104.4 L1681.6 -501.2 M265.0 -285.2 L-3040.1 11242.0 M-40.3 -98.4 L1685.4 -498.6 M273.6 -287.0 L-2936.5 11242.2 M-43.3 -92.4 L1689.3 -496.0 M282.2 -288.7 L-2833.0 11242.3 M-46.4 -86.3 L1693.2 -493.4 M290.8 -290.5 L-2729.5 11242.4 M-49.5 -80.1 L1697.1 -490.8 M307.8 -294.0 L-2522.4 11242.7 M-55.7 -67.6 L1705.0 -485.5 M316.3 -295.8 L-2418.9 11242.8 M-58.9 -61.2 L1709.0 -482.8 M324.7 -297.5 L-2315.4 11242.9 M-62.2 -54.8 L1713.0 -480.1 M333.1 -299.3 L-2211.9 11243.0 M-65.4 -48.3 L1717.0 -477.3 M341.5 -301.0 L-2108.3 11243.1 M-68.7 -41.7 L1721.1 -474.6 M349.9 -302.8 L-2004.8 11243.3 M-72.1 -35.1 L1725.2 -471.8 M358.2 -304.5 L-1901.3 11243.4 M-75.4 -28.4 L1729.3 -469.0 M366.5 -306.2 L-1797.8 11243.5 M-78.8 -21.6 L1733.5 -466.2 M374.7 -307.9 L-1694.3 11243.6 M-82.3 -14.7 L1737.6 -463.4 M391.2 -311.3 L-1487.2 11243.9 M-89.3 -0.8 L1746.1 -457.7 M399.3 -313.0 L-1383.7 11244.0 M-92.8 6.3 L1750.4 -454.8 M407.5 -314.7 L-1280.2 11244.1 M-96.4 13.5 L1754.7 -451.9 M415.6 -316.4 L-1176.6 11244.2 M-100.1 20.7 L1759.0 -449.0 M423.7 -318.1 L-1073.1 11244.4 M-103.8 28.1 L1763.4 -446.0 M431.8 -319.7 L-969.6 11244.5 M-107.5 35.5 L1767.8 -443.0 M439.8 -321.4 L-866.1 11244.6 M-111.3 43.0 L1772.2 -440.0 M447.8 -323.1 L-762.6 11244.7 M-115.1 50.6 L1776.7 -437.0 M455.8 -324.7 L-659.0 11244.9 M-118.9 58.3 L1781.2 -434.0 M471.6 -328.0 L-452.0 11245.1 M-126.8 73.9 L1790.3 -427.9 M479.5 -329.6 L-348.5 11245.2 M-130.8 81.8 L1794.9 -424.8 M487.4 -331.3 L-244.9 11245.3 M-134.8 89.9 L1799.5 -421.6 M495.2 -332.9 L-141.4 11245.5 M-138.9 98.0 L1804.2 -418.5 M503.0 -334.5 L-37.9 11245.6 M-143.0 106.3 L1808.9 -415.3 M510.8 -336.1 L65.6 11245.7 M-147.2 114.6 L1813.6 -412.1 M518.6 -337.7 L169.2 11245.8 M-151.5 123.1 L1818.4 -408.9 M526.3 -339.3 L272.7 11245.9 M-155.8 131.6 L1823.2 -405.6 M534.0 -340.9 L376.2 11246.1 M-160.1 140.3 L1828.0 -402.4 M549.3 -344.1 L583.2 11246.3 M-169.0 157.9 L1837.8 -395.8 M556.9 -345.7 L686.8 11246.4 M-173.5 166.9 L1842.8 -392.4 M564.5 -347.3 L790.3 11246.6 M-178.1 176.0 L1847.8 -389.0 M572.1 -348.8 L893.8 11246.7 M-182.7 185.2 L1852.8 -385.6 M579.6 -350.4 L997.3 11246.8 M-187.4 194.6 L1857.9 -382.2 M587.2 -352.0 L1100.9 11246.9 M-192.1 204.0 L1863.0 -378.8 M594.7 -353.5 L1204.4 11247.0 M-196.9 213.6 L1868.1 -375.3 M602.1 -355.1 L1307.9 11247.2 M-201.8 223.3 L1873.3 -371.8 M609.6 -356.6 L1411.4 11247.3 M-206.7 233.2 L1878.5 -368.3 M624.4 -359.7 L1618.5 11247.5 M-216.8 253.2 L1889.1 -361.1 M631.7 -361.2 L1722.0 11247.7 M-221.9 263.5 L1894.5 -357.5 M639.1 -362.7 L1825.5 11247.8 M-227.2 273.8 L1899.9 -353.8 M646.4 -364.2 L1929.0 11247.9 M-232.4 284.3 L1905.3 -350.2 M653.7 -365.7 L2032.6 11248.0 M-237.8 295.0 L1910.8 -346.5 M660.9 -367.3 L2136.1 11248.1 M-243.2 305.8 L1916.4 -342.7 M668.2 -368.8 L2239.6 11248.3 M-248.7 316.8 L1921.9 -339.0 M675.4 -370.2 L2343.1 11248.4 M-254.3 327.9 L1927.6 -335.2 M682.6 -371.7 L2446.7 11248.5 M-259.9 339.1 L1933.2 -331.3 M696.9 -374.7 L2653.7 11248.8 M-271.5 362.2 L1944.7 -323.6 M704.0 -376.2 L2757.2 11248.9 M-277.4 373.9 L1950.5 -319.7 M711.1 -377.7 L2860.7 11249.0 M-283.4 385.8 L1956.4 -315.7 M718.2 -379.1 L2964.3 11249.1 M-289.5 397.9 L1962.3 -311.7 M725.3 -380.6 L3067.8 11249.2 M-295.6 410.2 L1968.2 -307.7 M732.3 -382.0 L3171.3 11249.4 M-301.9 422.7 L1974.3 -303.6 M739.3 -383.5 L3274.8 11249.5 M-308.2 435.3 L1980.3 -299.5 M746.3 -384.9 L3378.4 11249.6 M-314.7 448.2 L1986.4 -295.4 M753.2 -386.4 L3445.4 11094.3 M-321.2 461.2 L1992.6 -291.3 M767.1 -389.3 L3513.0 10549.3 M-334.6 487.9 L2005.1 -282.8 M774.0 -390.7 L3544.6 10294.5 M-341.5 501.5 L2011.4 -278.6 M780.8 -392.1 L3574.9 10050.4 M-348.4 515.4 L2017.8 -274.3 M787.7 -393.5 L3604.0 9816.4 M-355.5 529.5 L2024.2 -269.9 M794.5 -394.9 L3631.8 9591.9 M-362.7 543.8 L2030.7 -265.5 M801.3 -396.4 L3658.6 9376.3 M-370.0 558.3 L2037.3 -261.1 M808.1 -397.8 L3684.3 9169.1 M-377.4 573.1 L2043.9 -256.6 M814.9 -399.2 L3709.0 8969.9 M-384.9 588.1 L2050.5 -252.1 M821.6 -400.6 L3732.8 8778.1 M-392.6 603.4 L2057.3 -247.6 M835.0 -403.3 L3777.8 8415.3 M-408.3 634.7 L2070.9 -238.4 M841.7 -404.7 L3799.1 8243.5 M-416.3 650.7 L2077.8 -233.7 M848.3 -406.1 L3819.7 8077.8 M-424.5 667.0 L2084.8 -229.0 M854.9 -407.5 L3839.5 7917.7 M-432.9 683.6 L2091.8 -224.3 M861.5 -408.8 L3858.7 7763.0 M-441.3 700.5 L2098.9 -219.5 M868.1 -410.2 L3877.3 7613.5 M-450.0 717.7 L2106.1 -214.6 M874.7 -411.6 L3895.2 7468.8 M-458.7 735.1 L2113.3 -209.7 M881.2 -412.9 L3912.6 7328.7 M-467.7 752.9 L2120.6 -204.8 M887.8 -414.3 L3929.4 7193.1 M-476.7 771.0 L2128.0 -199.8 M900.7 -417.0 L3961.5 6934.4 M-495.4 808.2 L2142.9 -189.8 M907.2 -418.3 L3976.8 6810.8 M-505.0 827.3 L2150.5 -184.6 M913.6 -419.6 L3991.7 6690.9 M-514.8 846.8 L2158.2 -179.5 M920.1 -421.0 L4006.2 6574.6 M-524.7 866.6 L2165.9 -174.3 M926.5 -422.3 L4020.2 6461.6 M-534.9 886.9 L2173.7 -169.0 M932.8 -423.6 L4033.8 6351.8 M-545.2 907.4 L2181.6 -163.7 M939.2 -424.9 L4047.0 6245.1 M-555.8 928.4 L2189.5 -158.3 M945.5 -426.3 L4059.9 6141.3 M-566.5 949.8 L2197.6 -152.9 M951.9 -427.6 L4072.4 6040.4 M-577.5 971.7 L2205.7 -147.4 M964.4 -430.2 L4096.5 5846.5 M-600.0 1016.6 L2222.1 -136.3 M970.7 -431.5 L4108.0 5753.4 M-611.7 1039.8 L2230.5 -130.6 M976.9 -432.8 L4119.3 5662.7 M-623.5 1063.4 L2238.9 -125.0 M983.2 -434.1 L4130.3 5574.3 M-635.7 1087.6 L2247.4 -119.2 M989.4 -435.3 L4140.9 5488.2 M-648.0 1112.2 L2256.1 -113.4 M995.6 -436.6 L4151.4 5404.2 M-660.6 1137.4 L2264.7 -107.5 M1001.7 -437.9 L4161.5 5322.2 M-673.5 1163.0 L2273.5 -101.6 M1007.9 -439.2 L4171.5 5242.2 M-686.7 1189.3 L2282.4 -95.6 M1014.0 -440.4 L4181.1 5164.2 M-700.2 1216.1 L2291.4 -89.5 M1026.2 -443.0 L4199.8 5013.6 M-728.0 1271.6 L2309.6 -77.2 M1032.3 -444.2 L4208.8 4940.9 M-742.4 1300.2 L2318.8 -71.0 M1038.3 -445.5 L4217.6 4869.9 M-757.1 1329.5 L2328.2 -64.7 M1044.3 -446.7 L4226.3 4800.5 M-772.2 1359.5 L2337.6 -58.3 M1050.3 -448.0 L4234.7 4732.6 M-787.6 1390.2 L2347.2 -51.9 M1056.3 -449.2 L4242.9 4666.3 M-803.3 1421.6 L2356.8 -45.3 M1062.3 -450.5 L4251.0 4601.4 M-819.5 1453.8 L2366.6 -38.8 M1068.3 -451.7 L4258.8 4537.9 M-836.0 1486.7 L2376.4 -32.1 M1074.2 -452.9 L4266.5 4475.8 M-853.0 1520.5 L2386.4 -25.4 M1086.1 -455.4 L4281.5 4355.4 M-888.1 1590.5 L2406.7 -11.7 M1091.9 -456.6 L4288.7 4297.1 M-906.4 1626.9 L2417.0 -4.7 M1097.8 -457.8 L4295.8 4240.0 M-925.1 1664.2 L2427.4 2.3 M1103.7 -459.0 L4302.7 4184.0 M-944.3 1702.5 L2437.9 9.4 M1109.5 -460.2 L4309.5 4129.2 M-964.0 1741.7 L2448.6 16.6 M1115.3 -461.4 L4316.2 4075.5 M-984.3 1782.1 L2459.3 23.9 M1121.1 -462.6 L4322.7 4022.8 M-1005.1 1823.5 L2470.2 31.2 M1126.9 -463.8 L4329.1 3971.2 M-1026.5 1866.1 L2481.3 38.7 M1132.7 -465.0 L4335.4 3920.5 M-1048.4 1909.9 L2492.4 46.2 M1144.1 -467.4 L4347.6 3822.2 M-1094.3 2001.2 L2515.1 61.5 M1149.8 -468.6 L4353.6 3774.3 M-1118.2 2048.8 L2526.6 69.3 M1155.5 -469.8 L4359.4 3727.4 M-1142.8 2097.9 L2538.3 77.2 M1161.2 -471.0 L4365.1 3681.4 M-1168.2 2148.4 L2550.1 85.2 M1166.9 -472.1 L4370.7 3636.2 M-1194.3 2200.5 L2562.1 93.2 M1172.5 -473.3 L4376.2 3591.8 M-1221.3 2254.1 L2574.2 101.4 M1178.2 -474.5 L4381.6 3548.2 M-1249.1 2309.5 L2586.4 109.7 M1183.8 -475.6 L4386.9 3505.4 M-1277.8 2366.7 L2598.8 118.0 M1189.4 -476.8 L4392.2 3463.3 M-1307.4 2425.6 L2611.4 126.5 M1200.5 -479.1 L4402.3 3381.4 M-1369.6 2549.6 L2636.9 143.7 M1206.1 -480.3 L4407.3 3341.5 M-1402.3 2614.7 L2649.9 152.5 M1211.6 -481.4 L4412.1 3302.2 M-1436.1 2682.1 L2663.1 161.4 M1217.1 -482.5 L4416.9 3263.7 M-1471.1 2751.9 L2676.5 170.4 M1222.6 -483.7 L4421.6 3225.7 M-1507.4 2824.2 L2690.0 179.6 M1228.1 -484.8 L4426.3 3188.4 M-1545.1 2899.1 L2703.7 188.8 M1233.5 -486.0 L4430.8 3151.8 M-1584.1 2976.8 L2717.5 198.2 M1239.0 -487.1 L4435.3 3115.7 M-1624.6 3057.5 L2731.6 207.7 M1244.4 -488.2 L4439.7 3080.2 M-1666.7 3141.4 L2745.8 217.3 M1255.2 -490.5 L4448.3 3010.9 M-1755.9 3319.1 L2774.8 236.9 M1260.6 -491.6 L4452.5 2977.1 M-1803.3 3413.5 L2789.6 246.8 M1266.0 -492.7 L4456.6 2943.8 M-1852.6 3511.8 L2804.6 257.0 M1271.4 -493.8 L4460.7 2911.0 M-1904.1 3614.4 L2819.8 267.2 M1276.7 -494.9 L4464.7 2878.8 M-1957.9 3721.4 L2835.2 277.6 M1282.0 -496.0 L4468.6 2847.0 M-2014.0 3833.3 L2850.8 288.2 M1287.3 -497.1 L4472.5 2815.7 M-2072.7 3950.3 L2866.6 298.9 M1292.6 -498.2 L4476.3 2784.9 M-2134.2 4072.8 L2882.7 309.7 M1297.9 -499.3 L4480.1 2754.5 M-2198.7 4201.1 L2899.0 320.7 M1308.4 -501.5 L4487.5 2695.2 M-2337.3 4477.3 L2932.2 343.1 M1313.7 -502.6 L4491.1 2666.2 M-2412.0 4626.1 L2949.2 354.6 M1318.9 -503.6 L4494.6 2637.6 M-2490.7 4782.9 L2966.4 366.2 M1324.1 -504.7 L4498.1 2609.4 M-2573.7 4948.2 L2983.8 378.0 M1329.3 -505.8 L4501.6 2581.6 M-2661.3 5122.8 L3001.5 389.9 M1334.4 -506.9 L4504.9 2554.2 M-2754.1 5307.5 L3019.5 402.1 M1339.6 -507.9 L4508.3 2527.2 M-2852.3 5503.1 L3037.8 414.4 M1344.8 -509.0 L4511.6 2500.6 M-2956.5 5710.8 L3056.3 426.9 M1349.9 -510.1 L4514.9 2474.3 M-3067.4 5931.6 L3075.1 439.6 M1360.1 -512.2 L4521.2 2422.9 M-3311.6 6418.0 L3113.5 465.5 M1365.2 -513.2 L4524.4 2397.7 M-3446.5 6686.7 L3133.1 478.8 M1370.3 -514.3 L4527.4 2372.9 M-3591.1 6974.9 L3153.1 492.3 M1375.3 -515.3 L4530.5 2348.4 M-3746.7 7284.8 L3173.4 505.9 M1380.4 -516.4 L4533.5 2324.2 M-3914.4 7618.8 L3194.0 519.8 M1385.4 -517.4 L4536.4 2300.4 M-4095.7 7980.0 L3214.9 534.0 M1390.4 -518.5 L4539.4 2276.8 M-4292.4 8371.8 L3236.1 548.3 M1395.4 -519.5 L4542.2 2253.6 M-4506.5 8798.3 L3257.7 562.9 M1400.4 -520.5 L4545.1 2230.7 M-4740.4 9264.3 L3279.6 577.7 M1410.3 -522.6 L4550.7 2185.7 M-5279.8 10338.9 L3324.6 608.0 M1415.3 -523.6 L4553.4 2163.6 M-5593.1 10962.8 L3347.6 623.6 M1420.2 -524.7 L4556.1 2141.9 M-5588.0 11239.0 L3371.1 639.4 M1425.1 -525.7 L4558.8 2120.4 M-5344.4 11239.3 L3394.9 655.5 M1430.1 -526.7 L4561.4 2099.1 M-5100.8 11239.6 L3419.1 671.8 M1434.9 -527.7 L4564.0 2078.2 M-4857.2 11239.9 L3443.7 688.5 M1439.8 -528.7 L4566.6 2057.5 M-4613.5 11240.2 L3468.8 705.4 M1444.7 -529.7 L4569.1 2037.0 M-4369.9 11240.5 L3494.3 722.6 M1449.5 -530.7 L4571.6 2016.8 M-4126.3 11240.8 L3520.3 740.1 M1459.2 -532.7 L4576.5 1977.2 M-3639.0 11241.3 L3573.6 776.1 M1464.0 -533.7 L4579.0 1957.7 M-3395.4 11241.6 L3600.9 794.6 M1468.8 -534.7 L4581.3 1938.4 M-3151.8 11241.9 L3628.8 813.4 M1473.6 -535.7 L4583.7 1919.4 M-2908.2 11242.2 L3657.2 832.6 M1478.4 -536.7 L4586.0 1900.6 M-2664.5 11242.5 L3686.1 852.1 M1483.1 -537.7 L4588.3 1882.1 M-2420.9 11242.8 L3715.6 872.0 M1487.9 -538.7 L4590.6 1863.7 M-2177.3 11243.1 L3745.6 892.3 M1492.6 -539.7 L4592.9 1845.6 M-1933.6 11243.4 L3776.2 912.9 M1497.4 -540.6 L4595.1 1827.7 M-1690.0 11243.6 L3807.3 934.0 M1506.8 -542.6 L4599.5 1792.4 M-1202.8 11244.2 L3871.5 977.3 M1511.4 -543.6 L4601.6 1775.1 M-959.1 11244.5 L3904.6 999.6 M1516.1 -544.5 L4603.7 1758.0 M-715.5 11244.8 L3938.3 1022.4 M1520.8 -545.5 L4605.8 1741.0 M-471.9 11245.1 L3972.7 1045.6 M1525.4 -546.5 L4607.9 1724.3 M-228.3 11245.4 L4007.8 1069.3 M1530.1 -547.4 L4610.0 1707.7 M15.4 11245.6 L4043.7 1093.5 M1534.7 -548.4 L4612.0 1691.4 M259.0 11245.9 L4080.3 1118.2 M1539.3 -549.3 L4614.0 1675.2 M502.6 11246.2 L4117.6 1143.4 M1543.9 -550.3 L4616.0 1659.1 M746.2 11246.5 L4155.8 1169.2 M1553.0 -552.2 L4619.9 1627.6 M1233.5 11247.1 L4234.6 1222.4 M1557.6 -553.1 L4621.8 1612.1 M1477.1 11247.4 L4275.3 1249.9 M1562.1 -554.1 L4623.7 1596.8 M1720.8 11247.7 L4316.9 1278.0 M1566.7 -555.0 L4625.6 1581.6 M1964.4 11247.9 L4359.5 1306.8 M1571.2 -556.0 L4627.5 1566.6 M2208.0 11248.2 L4403.0 1336.1 M1575.7 -556.9 L4629.3 1551.7 M2451.6 11248.5 L4447.6 1366.2 M1580.2 -557.8 L4631.1 1537.0 M2695.3 11248.8 L4493.1 1397.0 M1584.7 -558.8 L4633.0 1522.4 M2938.9 11249.1 L4539.8 1428.5 M1589.2 -559.7 L4634.7 1508.0 M3182.5 11249.4 L4587.6 1460.7 " stroke="#4a4a4a" stroke-width="1" fill="none" opacity="0.47" mask="url(#gmask)"/>
<path d="M28.9 -236.2 L-5731.6 11238.9 M28.9 -236.2 L1593.7 -560.6 M122.4 -255.6 L-4696.4 11240.1 M4.3 -187.3 L1627.1 -538.0 M212.5 -274.3 L-3661.2 11241.3 M-22.7 -133.4 L1662.9 -513.9 M299.3 -292.3 L-2626.0 11242.5 M-52.6 -73.9 L1701.0 -488.1 M383.0 -309.6 L-1590.7 11243.8 M-85.8 -7.8 L1741.9 -460.5 M463.7 -326.4 L-555.5 11245.0 M-122.8 66.0 L1785.7 -430.9 M541.7 -342.5 L479.7 11246.2 M-164.5 149.1 L1832.9 -399.1 M617.0 -358.1 L1514.9 11247.4 M-211.7 243.1 L1883.8 -364.7 M689.8 -373.2 L2550.2 11248.6 M-265.7 350.6 L1938.9 -327.5 M760.2 -387.8 L3480.0 10815.6 M-327.9 474.5 L1998.8 -287.1 M828.3 -401.9 L3755.7 8593.3 M-400.4 618.9 L2064.1 -243.0 M894.3 -415.6 L3945.7 7061.7 M-486.0 789.5 L2135.4 -194.8 M1020.1 -441.7 L4190.6 5088.0 M-713.9 1243.5 L2300.4 -83.4 M1080.1 -454.2 L4274.1 4414.9 M-870.3 1555.1 L2396.5 -18.6 M1138.4 -466.2 L4341.6 3870.9 M-1071.0 1954.9 L2503.7 53.8 M1194.9 -478.0 L4397.3 3422.0 M-1338.0 2486.6 L2624.1 135.1 M1249.8 -489.3 L4444.0 3045.3 M-1710.4 3228.5 L2760.2 227.0 M1303.2 -500.4 L4483.8 2724.6 M-2266.3 4335.8 L2915.5 331.8 M1355.0 -511.1 L4518.1 2448.4 M-3185.5 6166.9 L3094.1 452.4 M1405.4 -521.6 L4547.9 2208.0 M-4997.0 9775.5 L3301.9 592.7 M1454.4 -531.7 L4574.1 1996.9 M-3882.7 11241.1 L3546.7 758.0 M1502.1 -541.6 L4597.3 1809.9 M-1446.4 11243.9 L3839.1 955.4 M1548.5 -551.2 L4618.0 1643.3 M989.9 11246.8 L4194.8 1195.5 M1593.7 -560.6 L4636.5 1493.8 M3426.1 11249.7 L4636.5 1493.8 " stroke="#595959" stroke-width="1.35" fill="none" opacity="0.9"/>
<path d="M958.2 -428.9 L4084.6 5942.1" stroke="#a83a4e" stroke-width="1.5" fill="none"/>
<path d="M-588.6 993.9 L2213.9 -141.9" stroke="#6a9620" stroke-width="1.5" fill="none"/>
<circle cx="1461.7" cy="144" r="6.3" fill="url(#sb)"/><ellipse cx="1462.0" cy="140.3" rx="1.5" ry="0.9" fill="url(#hl)"/><circle cx="1448.5" cy="145.5" r="6.3" fill="url(#sr)"/><ellipse cx="1448.8" cy="141.8" rx="1.5" ry="0.9" fill="url(#hl)"/><circle cx="1431.9" cy="152.9" r="4.8" fill="url(#sr)"/><circle cx="1456.5" cy="153.2" r="6.3" fill="url(#sr)"/><ellipse cx="1456.8" cy="149.5" rx="1.5" ry="0.9" fill="url(#hl)"/><circle cx="1423.4" cy="155.4" r="4.8" fill="url(#sp)"/><circle cx="1408.8" cy="156.9" r="7.8" fill="url(#sp)"/><ellipse cx="1409.2" cy="152.4" rx="1.9" ry="1.1" fill="url(#hl)"/><circle cx="1426" cy="164.4" r="2.9" fill="url(#sr)"/><circle cx="1421.6" cy="162.6" r="5.7" fill="url(#sy)"/><ellipse cx="1421.9" cy="159.3" rx="1.4" ry="0.8" fill="url(#hl)"/><circle cx="1391.3" cy="163.2" r="5.2" fill="url(#sr)"/><ellipse cx="1391.6" cy="160.2" rx="1.2" ry="0.7" fill="url(#hl)"/><circle cx="1387.6" cy="171.8" r="3.7" fill="url(#sp)"/><circle cx="1419.4" cy="169.8" r="3.4" fill="url(#sk)"/><circle cx="1381.1" cy="170.7" r="4.6" fill="url(#sb)"/><circle cx="1368.3" cy="171.5" r="6.5" fill="url(#sq)"/><ellipse cx="1368.6" cy="167.7" rx="1.6" ry="0.9" fill="url(#hl)"/><circle cx="1426" cy="172.6" r="3.2" fill="url(#sr)"/><circle cx="1349.2" cy="175.6" r="7.6" fill="url(#sk)"/><ellipse cx="1349.6" cy="171.2" rx="1.8" ry="1.1" fill="url(#hl)"/><circle cx="1418.7" cy="175.8" r="4.8" fill="url(#se)"/><circle cx="1382.2" cy="177.5" r="4.4" fill="url(#so)"/><circle cx="1392.2" cy="178.1" r="3.4" fill="url(#sp)"/><circle cx="1397.7" cy="181" r="3.7" fill="url(#sr)"/><circle cx="1339.1" cy="181" r="3.3" fill="url(#sg)"/><circle cx="1387.6" cy="181.5" r="4" fill="url(#sr)"/><circle cx="1343.5" cy="185" r="3.6" fill="url(#sr)"/><circle cx="1413.4" cy="186.1" r="7.8" fill="url(#sr)"/><ellipse cx="1413.8" cy="181.6" rx="1.9" ry="1.1" fill="url(#hl)"/><circle cx="1355.5" cy="186.2" r="4.7" fill="url(#sr)"/><circle cx="1387.9" cy="189" r="5.5" fill="url(#sp)"/><ellipse cx="1388.2" cy="185.8" rx="1.3" ry="0.8" fill="url(#hl)"/><circle cx="1332.3" cy="189.4" r="4.8" fill="url(#sk)"/><circle cx="1364.7" cy="189.6" r="4.7" fill="url(#se)"/><circle cx="1309.7" cy="190" r="5.6" fill="url(#sm)"/><ellipse cx="1310.0" cy="186.8" rx="1.3" ry="0.8" fill="url(#hl)"/><circle cx="1375.6" cy="190.7" r="6.3" fill="url(#sr)"/><ellipse cx="1375.9" cy="187.0" rx="1.5" ry="0.9" fill="url(#hl)"/><circle cx="1322.3" cy="192.9" r="7.4" fill="url(#sp)"/><ellipse cx="1322.7" cy="188.6" rx="1.8" ry="1.0" fill="url(#hl)"/><circle cx="1297.6" cy="193.2" r="3.2" fill="url(#sr)"/><circle cx="1352.7" cy="193.4" r="5.8" fill="url(#sk)"/><ellipse cx="1353.0" cy="190.0" rx="1.4" ry="0.8" fill="url(#hl)"/><circle cx="1304.5" cy="193.8" r="3.4" fill="url(#sr)"/><circle cx="1337.5" cy="193.9" r="4.4" fill="url(#sg)"/><circle cx="1304.4" cy="193.9" r="3.4" fill="url(#sr)"/><circle cx="1368.6" cy="202.5" r="3.6" fill="url(#so)"/><circle cx="1391.6" cy="202.1" r="6.3" fill="url(#sb)"/><ellipse cx="1391.9" cy="198.4" rx="1.5" ry="0.9" fill="url(#hl)"/><circle cx="1361.3" cy="199.9" r="6.9" fill="url(#sr)"/><ellipse cx="1361.6" cy="195.9" rx="1.7" ry="1.0" fill="url(#hl)"/><circle cx="1339.3" cy="201.8" r="4.8" fill="url(#sk)"/><circle cx="1376.9" cy="202.9" r="6" fill="url(#sr)"/><ellipse cx="1377.2" cy="199.4" rx="1.4" ry="0.8" fill="url(#hl)"/><circle cx="1307.1" cy="204" r="4" fill="url(#sr)"/><circle cx="1290.4" cy="204.2" r="8.1" fill="url(#sp)"/><ellipse cx="1290.8" cy="199.5" rx="1.9" ry="1.1" fill="url(#hl)"/><circle cx="1271.7" cy="204.4" r="3" fill="url(#sr)"/><circle cx="1347.4" cy="205.7" r="3.4" fill="url(#sp)"/><circle cx="1275.3" cy="206.5" r="4.6" fill="url(#sr)"/><circle cx="1264.4" cy="206.6" r="2.9" fill="url(#sy)"/><circle cx="1280.5" cy="208" r="5.2" fill="url(#sr)"/><ellipse cx="1280.8" cy="205.0" rx="1.2" ry="0.7" fill="url(#hl)"/><circle cx="1429.3" cy="218.8" r="5.2" fill="url(#sr)"/><ellipse cx="1429.6" cy="215.8" rx="1.2" ry="0.7" fill="url(#hl)"/><circle cx="1309.8" cy="210.2" r="3" fill="url(#sr)"/><circle cx="1301.3" cy="210.3" r="6.4" fill="url(#sy)"/><ellipse cx="1301.6" cy="206.6" rx="1.5" ry="0.9" fill="url(#hl)"/><circle cx="1334.7" cy="210.3" r="4.7" fill="url(#sb)"/><circle cx="1408.6" cy="204.4" r="14.3" fill="url(#sy)"/><ellipse cx="1409.3" cy="196.1" rx="3.4" ry="2.0" fill="url(#hl)"/><circle cx="1329.2" cy="214.5" r="3.4" fill="url(#sg)"/><circle cx="1353.4" cy="210.6" r="3.1" fill="url(#sb)"/><circle cx="1425.3" cy="212.4" r="8.4" fill="url(#sp)"/><ellipse cx="1425.7" cy="207.5" rx="2.0" ry="1.2" fill="url(#hl)"/><circle cx="1284.2" cy="214.6" r="5" fill="url(#sr)"/><ellipse cx="1284.5" cy="211.7" rx="1.2" ry="0.7" fill="url(#hl)"/><circle cx="1322" cy="216" r="6.3" fill="url(#sr)"/><ellipse cx="1322.3" cy="212.3" rx="1.5" ry="0.9" fill="url(#hl)"/><circle cx="1308" cy="216.6" r="5.7" fill="url(#sp)"/><ellipse cx="1308.3" cy="213.3" rx="1.4" ry="0.8" fill="url(#hl)"/><circle cx="1341.3" cy="216.6" r="4.7" fill="url(#sm)"/><circle cx="1265" cy="218" r="5.3" fill="url(#sr)"/><ellipse cx="1265.3" cy="214.9" rx="1.3" ry="0.7" fill="url(#hl)"/><circle cx="1270.2" cy="218" r="4" fill="url(#sr)"/><circle cx="1277" cy="219" r="3" fill="url(#so)"/><circle cx="1248.7" cy="219.8" r="7.4" fill="url(#sp)"/><ellipse cx="1249.1" cy="215.5" rx="1.8" ry="1.0" fill="url(#hl)"/><circle cx="1291.3" cy="220.7" r="6" fill="url(#sr)"/><ellipse cx="1291.6" cy="217.2" rx="1.4" ry="0.8" fill="url(#hl)"/><circle cx="1282.2" cy="221.5" r="3.4" fill="url(#sr)"/><circle cx="1335.3" cy="221.5" r="4.7" fill="url(#sr)"/><circle cx="1304.2" cy="221.8" r="3.3" fill="url(#sy)"/><circle cx="1350.5" cy="222.1" r="5.2" fill="url(#sr)"/><ellipse cx="1350.8" cy="219.1" rx="1.2" ry="0.7" fill="url(#hl)"/><circle cx="1417.1" cy="223.3" r="5.8" fill="url(#sg)"/><ellipse cx="1417.4" cy="219.9" rx="1.4" ry="0.8" fill="url(#hl)"/><circle cx="1333.8" cy="227.3" r="4.5" fill="url(#sp)"/><circle cx="1270.7" cy="224.7" r="2.3" fill="url(#sg)"/><circle cx="1365" cy="224.8" r="5.8" fill="url(#sk)"/><ellipse cx="1365.3" cy="221.4" rx="1.4" ry="0.8" fill="url(#hl)"/><circle cx="1259.9" cy="225.2" r="1.7" fill="url(#sp)"/><circle cx="1265.6" cy="225.5" r="4.4" fill="url(#sr)"/><circle cx="1341.5" cy="225.5" r="3.8" fill="url(#sk)"/><circle cx="1236.7" cy="227.3" r="6.8" fill="url(#sr)"/><ellipse cx="1237.0" cy="223.4" rx="1.6" ry="1.0" fill="url(#hl)"/><circle cx="1320.6" cy="227.4" r="8.8" fill="url(#sm)"/><ellipse cx="1321.0" cy="222.3" rx="2.1" ry="1.2" fill="url(#hl)"/><circle cx="1393.2" cy="228" r="11.9" fill="url(#sq)"/><ellipse cx="1393.8" cy="221.1" rx="2.9" ry="1.7" fill="url(#hl)"/><circle cx="1295.4" cy="228.1" r="2.9" fill="url(#sr)"/><circle cx="1205" cy="228.4" r="7.4" fill="url(#sp)"/><ellipse cx="1205.4" cy="224.1" rx="1.8" ry="1.0" fill="url(#hl)"/><circle cx="1354.5" cy="230.7" r="3.8" fill="url(#sr)"/><circle cx="1271.2" cy="230.9" r="2.3" fill="url(#sg)"/><circle cx="1179.8" cy="232" r="4.6" fill="url(#sm)"/><circle cx="1191.5" cy="232.4" r="7.4" fill="url(#sr)"/><ellipse cx="1191.9" cy="228.1" rx="1.8" ry="1.0" fill="url(#hl)"/><circle cx="1316.3" cy="237.5" r="3.2" fill="url(#sr)"/><circle cx="1345.6" cy="232.6" r="5.8" fill="url(#sp)"/><ellipse cx="1345.9" cy="229.2" rx="1.4" ry="0.8" fill="url(#hl)"/><circle cx="1363.4" cy="234" r="3.6" fill="url(#sp)"/><circle cx="1256" cy="234.9" r="10.3" fill="url(#se)"/><ellipse cx="1256.5" cy="228.9" rx="2.5" ry="1.4" fill="url(#hl)"/><circle cx="1226.1" cy="229.2" r="7.8" fill="url(#sp)"/><ellipse cx="1226.5" cy="224.7" rx="1.9" ry="1.1" fill="url(#hl)"/><circle cx="1371.9" cy="238.8" r="3.4" fill="url(#sb)"/><circle cx="1152.3" cy="236" r="4" fill="url(#sr)"/><circle cx="1176.1" cy="236" r="5.5" fill="url(#so)"/><ellipse cx="1176.4" cy="232.8" rx="1.3" ry="0.8" fill="url(#hl)"/><circle cx="1227.3" cy="240.5" r="5.5" fill="url(#sg)"/><ellipse cx="1227.6" cy="237.3" rx="1.3" ry="0.8" fill="url(#hl)"/><circle cx="1375.9" cy="243.4" r="4.6" fill="url(#sr)"/><circle cx="1216.7" cy="237.6" r="7.3" fill="url(#sr)"/><ellipse cx="1217.1" cy="233.4" rx="1.8" ry="1.0" fill="url(#hl)"/><circle cx="1304" cy="238" r="2.3" fill="url(#sg)"/><circle cx="1319.3" cy="250.3" r="5.9" fill="url(#sg)"/><ellipse cx="1319.6" cy="246.9" rx="1.4" ry="0.8" fill="url(#hl)"/><circle cx="1309.8" cy="238.8" r="2.6" fill="url(#sr)"/><circle cx="1282.8" cy="253.8" r="5.2" fill="url(#sp)"/><ellipse cx="1283.1" cy="250.8" rx="1.2" ry="0.7" fill="url(#hl)"/><circle cx="1331.6" cy="240.8" r="12.2" fill="url(#sr)"/><ellipse cx="1332.2" cy="233.7" rx="2.9" ry="1.7" fill="url(#hl)"/><circle cx="1183.2" cy="241.8" r="2.9" fill="url(#sr)"/><circle cx="1239.1" cy="242.4" r="4.7" fill="url(#sp)"/><circle cx="1125.7" cy="242.5" r="1.7" fill="url(#sp)"/><circle cx="1106" cy="242.9" r="1.4" fill="url(#sp)"/><circle cx="1311.3" cy="243.7" r="3.6" fill="url(#sg)"/><circle cx="1134.5" cy="243.8" r="3.4" fill="url(#sr)"/><circle cx="1122.8" cy="244" r="2.3" fill="url(#sr)"/><circle cx="1128.5" cy="244" r="1.7" fill="url(#sr)"/><circle cx="1304.2" cy="244" r="2.9" fill="url(#sr)"/><circle cx="1290.3" cy="244.1" r="12" fill="url(#sm)"/><ellipse cx="1290.9" cy="237.1" rx="2.9" ry="1.7" fill="url(#hl)"/><circle cx="1247.9" cy="244.7" r="3.4" fill="url(#so)"/><circle cx="1148" cy="244.8" r="4.8" fill="url(#sp)"/><circle cx="1156.8" cy="245.2" r="5.2" fill="url(#sp)"/><ellipse cx="1157.1" cy="242.2" rx="1.2" ry="0.7" fill="url(#hl)"/><circle cx="1367.3" cy="247.4" r="8.2" fill="url(#sp)"/><ellipse cx="1367.7" cy="242.6" rx="2.0" ry="1.1" fill="url(#hl)"/><circle cx="1351.4" cy="246" r="10.7" fill="url(#sr)"/><ellipse cx="1351.9" cy="239.8" rx="2.6" ry="1.5" fill="url(#hl)"/><circle cx="1244.5" cy="248.1" r="2.9" fill="url(#sr)"/><circle cx="1253.1" cy="248.1" r="2.9" fill="url(#sy)"/><circle cx="1173.2" cy="248.4" r="10.1" fill="url(#sp)"/><ellipse cx="1173.7" cy="242.5" rx="2.4" ry="1.4" fill="url(#hl)"/><circle cx="1256.5" cy="248.7" r="1.4" fill="url(#sp)"/><circle cx="1087.6" cy="249.7" r="5.7" fill="url(#sr)"/><ellipse cx="1087.9" cy="246.4" rx="1.4" ry="0.8" fill="url(#hl)"/><circle cx="1143.4" cy="254.9" r="7.4" fill="url(#sg)"/><ellipse cx="1143.8" cy="250.6" rx="1.8" ry="1.0" fill="url(#hl)"/><circle cx="1122.2" cy="250.3" r="4" fill="url(#sr)"/><circle cx="1187.6" cy="251.2" r="7" fill="url(#so)"/><ellipse cx="1187.9" cy="247.1" rx="1.7" ry="1.0" fill="url(#hl)"/><circle cx="1241" cy="256.7" r="4.6" fill="url(#so)"/><circle cx="1333.5" cy="255.4" r="2.1" fill="url(#sg)"/><circle cx="1258.2" cy="256.9" r="4.6" fill="url(#sp)"/><circle cx="1270.8" cy="257.3" r="4.6" fill="url(#sr)"/><circle cx="1339.2" cy="257.7" r="3.4" fill="url(#sp)"/><circle cx="1067.5" cy="258" r="3.7" fill="url(#so)"/><circle cx="1131.4" cy="258.3" r="6" fill="url(#sr)"/><ellipse cx="1131.7" cy="254.8" rx="1.4" ry="0.8" fill="url(#hl)"/><circle cx="1081.9" cy="258.9" r="5.7" fill="url(#sp)"/><ellipse cx="1082.2" cy="255.6" rx="1.4" ry="0.8" fill="url(#hl)"/><circle cx="1307.8" cy="259.4" r="5.5" fill="url(#sp)"/><ellipse cx="1308.1" cy="256.2" rx="1.3" ry="0.8" fill="url(#hl)"/><circle cx="1110.8" cy="262.9" r="5.2" fill="url(#se)"/><ellipse cx="1111.1" cy="259.9" rx="1.2" ry="0.7" fill="url(#hl)"/><circle cx="1213.6" cy="268.7" r="4" fill="url(#sk)"/><circle cx="1292" cy="260.7" r="5.5" fill="url(#sr)"/><ellipse cx="1292.3" cy="257.5" rx="1.3" ry="0.8" fill="url(#hl)"/><circle cx="1328.7" cy="261.7" r="7" fill="url(#sp)"/><ellipse cx="1329.0" cy="257.6" rx="1.7" ry="1.0" fill="url(#hl)"/><circle cx="1225" cy="262.4" r="3.7" fill="url(#sr)"/><circle cx="1264.7" cy="262.4" r="4.6" fill="url(#sp)"/><circle cx="1276.5" cy="262.4" r="3.4" fill="url(#sr)"/><circle cx="1092.7" cy="264.3" r="7.1" fill="url(#sr)"/><ellipse cx="1093.1" cy="260.2" rx="1.7" ry="1.0" fill="url(#hl)"/><circle cx="1071" cy="264.6" r="3.8" fill="url(#sr)"/><circle cx="1206.9" cy="256.7" r="13.2" fill="url(#sq)"/><ellipse cx="1207.6" cy="249.0" rx="3.2" ry="1.8" fill="url(#hl)"/><circle cx="1232.4" cy="265.3" r="4" fill="url(#sr)"/><circle cx="1321.6" cy="265.7" r="2.5" fill="url(#sb)"/><circle cx="1244.1" cy="265.8" r="8.8" fill="url(#sr)"/><ellipse cx="1244.5" cy="260.7" rx="2.1" ry="1.2" fill="url(#hl)"/><circle cx="1315.5" cy="266.6" r="3.3" fill="url(#sb)"/><circle cx="1147.8" cy="268.1" r="6.9" fill="url(#sp)"/><ellipse cx="1148.1" cy="264.1" rx="1.7" ry="1.0" fill="url(#hl)"/><circle cx="1284" cy="268.1" r="9.2" fill="url(#sr)"/><ellipse cx="1284.5" cy="262.8" rx="2.2" ry="1.3" fill="url(#hl)"/><circle cx="1119.4" cy="270.9" r="12.3" fill="url(#sp)"/><ellipse cx="1120.0" cy="263.8" rx="3.0" ry="1.7" fill="url(#hl)"/><circle cx="1210.5" cy="272.7" r="2.3" fill="url(#sp)"/><circle cx="1302.2" cy="273" r="8.7" fill="url(#sr)"/><ellipse cx="1302.6" cy="268.0" rx="2.1" ry="1.2" fill="url(#hl)"/><circle cx="1048.1" cy="273.4" r="6.6" fill="url(#sg)"/><ellipse cx="1048.4" cy="269.6" rx="1.6" ry="0.9" fill="url(#hl)"/><circle cx="1206.1" cy="274.4" r="2.3" fill="url(#so)"/><circle cx="1255.6" cy="277.3" r="8.2" fill="url(#sy)"/><ellipse cx="1256.0" cy="272.5" rx="2.0" ry="1.1" fill="url(#hl)"/><circle cx="1212.4" cy="278.4" r="3.7" fill="url(#sp)"/><circle cx="1101.6" cy="278.7" r="6.3" fill="url(#se)"/><ellipse cx="1101.9" cy="275.0" rx="1.5" ry="0.9" fill="url(#hl)"/><circle cx="1189.5" cy="279" r="4" fill="url(#so)"/><circle cx="1197.9" cy="279" r="4.4" fill="url(#sp)"/><circle cx="1275.2" cy="279" r="9.2" fill="url(#sr)"/><ellipse cx="1275.7" cy="273.7" rx="2.2" ry="1.3" fill="url(#hl)"/><circle cx="1157.6" cy="279.3" r="12.4" fill="url(#sk)"/><ellipse cx="1158.2" cy="272.1" rx="3.0" ry="1.7" fill="url(#hl)"/><circle cx="1228.2" cy="280.2" r="8" fill="url(#sm)"/><ellipse cx="1228.6" cy="275.6" rx="1.9" ry="1.1" fill="url(#hl)"/><circle cx="1187.2" cy="282.4" r="3.2" fill="url(#sb)"/><circle cx="1040.3" cy="284.9" r="6.3" fill="url(#sy)"/><ellipse cx="1040.6" cy="281.2" rx="1.5" ry="0.9" fill="url(#hl)"/><circle cx="1053.3" cy="283.7" r="6.9" fill="url(#sp)"/><ellipse cx="1053.6" cy="279.7" rx="1.7" ry="1.0" fill="url(#hl)"/><circle cx="1102.2" cy="287.3" r="2.5" fill="url(#so)"/><circle cx="1243.9" cy="287.9" r="8.2" fill="url(#sy)"/><ellipse cx="1244.3" cy="283.1" rx="2.0" ry="1.1" fill="url(#hl)"/><circle cx="1196.4" cy="288.7" r="7.8" fill="url(#sp)"/><ellipse cx="1196.8" cy="284.2" rx="1.9" ry="1.1" fill="url(#hl)"/><circle cx="1176.3" cy="288.8" r="2.7" fill="url(#sp)"/><circle cx="1166.8" cy="289.3" r="1.9" fill="url(#sp)"/><circle cx="1171.3" cy="289.5" r="3.9" fill="url(#sp)"/><circle cx="1183.8" cy="291.1" r="4" fill="url(#sp)"/><circle cx="1103.1" cy="291.8" r="2.5" fill="url(#sr)"/><circle cx="1158.9" cy="294.4" r="2.9" fill="url(#sr)"/><circle cx="1153.1" cy="295" r="2.9" fill="url(#sr)"/><circle cx="1144" cy="295.5" r="5.2" fill="url(#sr)"/><ellipse cx="1144.3" cy="292.5" rx="1.2" ry="0.7" fill="url(#hl)"/><circle cx="1132.5" cy="300.1" r="5.7" fill="url(#sr)"/><ellipse cx="1132.8" cy="296.8" rx="1.4" ry="0.8" fill="url(#hl)"/><circle cx="1040" cy="298.2" r="6.9" fill="url(#sr)"/><ellipse cx="1040.3" cy="294.2" rx="1.7" ry="1.0" fill="url(#hl)"/><circle cx="1209.5" cy="299" r="8.2" fill="url(#sk)"/><ellipse cx="1209.9" cy="294.2" rx="2.0" ry="1.1" fill="url(#hl)"/><circle cx="1075.3" cy="305.3" r="4.6" fill="url(#sg)"/><circle cx="1080.1" cy="291.3" r="11.8" fill="url(#sk)"/><ellipse cx="1080.7" cy="284.5" rx="2.8" ry="1.7" fill="url(#hl)"/><circle cx="1188.2" cy="302.2" r="7.4" fill="url(#sr)"/><ellipse cx="1188.6" cy="297.9" rx="1.8" ry="1.0" fill="url(#hl)"/><circle cx="1143.4" cy="302.4" r="5" fill="url(#sr)"/><ellipse cx="1143.7" cy="299.5" rx="1.2" ry="0.7" fill="url(#hl)"/><circle cx="1158" cy="303.5" r="10.5" fill="url(#sr)"/><ellipse cx="1158.5" cy="297.4" rx="2.5" ry="1.5" fill="url(#hl)"/><circle cx="1118.2" cy="299" r="11.5" fill="url(#sp)"/><ellipse cx="1118.8" cy="292.3" rx="2.8" ry="1.6" fill="url(#hl)"/><circle cx="1111.3" cy="317.9" r="2.9" fill="url(#sr)"/><circle cx="1101.6" cy="311" r="11.5" fill="url(#sp)"/><ellipse cx="1102.2" cy="304.3" rx="2.8" ry="1.6" fill="url(#hl)"/><circle cx="1129.1" cy="314.4" r="3.4" fill="url(#sp)"/><circle cx="1116.5" cy="312.1" r="2.5" fill="url(#sr)"/><circle cx="1123.9" cy="313.1" r="4.4" fill="url(#sg)"/><circle cx="1140.3" cy="313.3" r="10.1" fill="url(#sr)"/><ellipse cx="1140.8" cy="307.4" rx="2.4" ry="1.4" fill="url(#hl)"/><circle cx="1058.1" cy="317.3" r="8.9" fill="url(#so)"/><ellipse cx="1058.5" cy="312.1" rx="2.1" ry="1.2" fill="url(#hl)"/><circle cx="1118.2" cy="319.4" r="4.4" fill="url(#sb)"/><circle cx="1064.7" cy="305.8" r="8.9" fill="url(#sr)"/><ellipse cx="1065.1" cy="300.6" rx="2.1" ry="1.2" fill="url(#hl)"/><circle cx="1100.4" cy="333" r="7.4" fill="url(#sr)"/><ellipse cx="1100.8" cy="328.7" rx="1.8" ry="1.0" fill="url(#hl)"/><circle cx="1043.2" cy="327" r="9.4" fill="url(#sp)"/><ellipse cx="1043.7" cy="321.5" rx="2.3" ry="1.3" fill="url(#hl)"/><circle cx="1092.6" cy="329" r="10.3" fill="url(#sp)"/><ellipse cx="1093.1" cy="323.0" rx="2.5" ry="1.4" fill="url(#hl)"/><circle cx="1061" cy="329.5" r="6.5" fill="url(#sp)"/><ellipse cx="1061.3" cy="325.7" rx="1.6" ry="0.9" fill="url(#hl)"/><circle cx="1068.4" cy="335.6" r="3.7" fill="url(#sr)"/><circle cx="1035.7" cy="340.8" r="9.7" fill="url(#so)"/><ellipse cx="1036.2" cy="335.2" rx="2.3" ry="1.4" fill="url(#hl)"/><circle cx="1076.8" cy="337.3" r="3" fill="url(#sr)"/><circle cx="1061.6" cy="338.3" r="4.4" fill="url(#se)"/><circle cx="1076.8" cy="344" r="3.2" fill="url(#sp)"/><circle cx="1014.6" cy="344.5" r="10.1" fill="url(#sb)"/><ellipse cx="1015.1" cy="338.6" rx="2.4" ry="1.4" fill="url(#hl)"/><circle cx="1066.8" cy="346.9" r="5.4" fill="url(#sr)"/><ellipse cx="1067.1" cy="343.8" rx="1.3" ry="0.8" fill="url(#hl)"/><circle cx="1014.4" cy="366.6" r="6" fill="url(#sg)"/><ellipse cx="1014.7" cy="363.1" rx="1.4" ry="0.8" fill="url(#hl)"/><circle cx="1008.7" cy="359.2" r="8.9" fill="url(#sy)"/><ellipse cx="1009.1" cy="354.0" rx="2.1" ry="1.2" fill="url(#hl)"/><circle cx="1044" cy="364.4" r="12.9" fill="url(#sr)"/><ellipse cx="1044.6" cy="356.9" rx="3.1" ry="1.8" fill="url(#hl)"/><circle cx="1024.5" cy="366.6" r="4.6" fill="url(#sr)"/><circle cx="984.3" cy="369.5" r="7.2" fill="url(#sp)"/><ellipse cx="984.7" cy="365.3" rx="1.7" ry="1.0" fill="url(#hl)"/><circle cx="1024.2" cy="375.2" r="5.7" fill="url(#sr)"/><ellipse cx="1024.5" cy="371.9" rx="1.4" ry="0.8" fill="url(#hl)"/><circle cx="991.5" cy="377.9" r="6.6" fill="url(#sr)"/><ellipse cx="991.8" cy="374.1" rx="1.6" ry="0.9" fill="url(#hl)"/><circle cx="965.8" cy="398.1" r="4.5" fill="url(#sr)"/><circle cx="965.8" cy="387.8" r="8.2" fill="url(#sg)"/><ellipse cx="966.2" cy="383.0" rx="2.0" ry="1.1" fill="url(#hl)"/><circle cx="989.8" cy="393.6" r="7.4" fill="url(#sb)"/><ellipse cx="990.2" cy="389.3" rx="1.8" ry="1.0" fill="url(#hl)"/><circle cx="998" cy="397.6" r="8.2" fill="url(#sq)"/><ellipse cx="998.4" cy="392.8" rx="2.0" ry="1.1" fill="url(#hl)"/><circle cx="972.6" cy="400.2" r="4.8" fill="url(#sp)"/><circle cx="957.7" cy="405" r="5.5" fill="url(#sr)"/><ellipse cx="958.0" cy="401.8" rx="1.3" ry="0.8" fill="url(#hl)"/><circle cx="950.1" cy="418" r="4" fill="url(#se)"/><circle cx="964.8" cy="418.2" r="6.9" fill="url(#se)"/><ellipse cx="965.1" cy="414.2" rx="1.7" ry="1.0" fill="url(#hl)"/><circle cx="949.7" cy="424.1" r="4.3" fill="url(#sr)"/>
<path d="M856 408.4 L1090 313.6 M1130.5 297.2 L1149 289.7 M1169.5 281.4 L1201.5 268.4 M1218.7 261.4 L1256 246.3 M1302 227.7 L1572 118.3 " stroke="#6a9620" stroke-width="1.5" fill="none"/>
<path d="M1254 247.1 L1274 239.0 M1293.5 231.1 L1303 227.3" stroke="#1a2408" stroke-width="1.6" fill="none" stroke-dasharray="2.2 1.6"/>
<path d="M1182.4 28 L1274.6 216" stroke="#a83a4e" stroke-width="1.5" fill="none" opacity="0.85"/>
<circle cx="1259.3" cy="170.3" r="11.8" fill="none" stroke="#141414" stroke-width="1.1" stroke-dasharray="3.2 2.6"/><circle cx="1259.3" cy="170.3" r="7.6" fill="none" stroke="#141414" stroke-width="1.1" stroke-dasharray="2.6 2.4"/><path d="M1256.8 170.3 L1259.3 167.8 L1261.8 170.3 L1259.3 172.8 Z" fill="none" stroke="#141414" stroke-width="1.2"/><path d="M1255.8 182.4 L1254 200" stroke="#2a2a2a" stroke-width="0.7"/>
<path d="M1315.8 124.2 L1328.2 110.5 L1328.2 127.5 Z" fill="none" stroke="#111" stroke-width="1"/>
<path d="M1274.6 218 L1281 230 M1285.5 239.5 L1291.8 253" stroke="#151515" stroke-width="1.2"/><path d="M1283.4 227.5 L1283.4 232.5 M1282 238 L1281.4 241" stroke="#151515" stroke-width="1"/>
<circle cx="1283.5" cy="235.1" r="10.2" fill="none" stroke="#fff" stroke-width="1.7"/><circle cx="1283.5" cy="235.1" r="10.2" fill="none" stroke="#d62a3a" stroke-width="1.7" stroke-dasharray="4 4.01" stroke-dashoffset="2"/><circle cx="1283.4" cy="235.3" r="2.2" fill="#ffa028"/>
</svg>
<div class="abs" style="left:0;top:0;width:716px;height:27px;background:#3b3b3b"></div>
</div>
<div class="abs" style="left:856.0px;top:4.4px;width:25.6px;height:19.2px;background:#232323;border-radius:0 4px 4px 0"></div>
<div class="abs" style="left:856px;top:4px;width:20px;height:20px;overflow:hidden"><div class="t" style="left:-2.6px;top:4.8px;font-size:11.9px;color:#e4e4e4">de</div></div>
<svg style="left:0;top:0" width="1" height="1"><path d="M871.2 12.5 L874.8 16.5 L878.3 12.5" fill="none" stroke="#d0d0d0" stroke-width="1.45" stroke-linecap="round" stroke-linejoin="round"/></svg>
<div class="t" style="left:895.0px;top:9.07px;font-size:10.71px;color:#e4e4e4;-webkit-text-stroke:0.27px;transform:scaleX(1.111);transform-origin:left center;">View</div>
<div class="t" style="left:935.0px;top:9.07px;font-size:10.71px;color:#e4e4e4;-webkit-text-stroke:0.27px;transform:scaleX(1.111);transform-origin:left center;">Select</div>
<div class="t" style="left:982.0px;top:9.07px;font-size:10.71px;color:#e4e4e4;-webkit-text-stroke:0.27px;transform:scaleX(1.111);transform-origin:left center;">Add</div>
<div class="t" style="left:1018.0px;top:9.07px;font-size:10.71px;color:#e4e4e4;-webkit-text-stroke:0.27px;transform:scaleX(1.111);transform-origin:left center;">Object</div>
<div class="abs" style="left:1077.0px;top:4.4px;width:77.6px;height:19.2px;background:#232323;border-radius:4px"></div>
<svg style="left:0;top:0" width="1" height="1"><path d="M1085.5 20 L1085.5 9 M1083.3 11.2 L1085.5 8.6 L1087.7 11.2 M1085.5 20 L1095 20 M1092.8 17.8 L1095.4 20 L1092.8 22.2 M1085.5 20 L1091.5 14" fill="none" stroke="#e0e0e0" stroke-width="1.1" stroke-linecap="round" stroke-linejoin="round"/><circle cx="1085.5" cy="20" r="1.5" fill="#232323" stroke="#e0e0e0" stroke-width="1"/></svg>
<div class="t" style="left:1102.0px;top:9.07px;font-size:10.71px;color:#e4e4e4;-webkit-text-stroke:0.27px;transform:scaleX(1.111);transform-origin:left center;">Global</div>
<svg style="left:0;top:0" width="1" height="1"><path d="M1145.0 12.5 L1148.5 16.5 L1152.0 12.5" fill="none" stroke="#d0d0d0" stroke-width="1.45" stroke-linecap="round" stroke-linejoin="round"/></svg>
<div class="abs" style="left:1162.0px;top:4.4px;width:30.0px;height:19.2px;background:#232323;border-radius:4px"></div>
<svg style="left:0;top:0" width="1" height="1"><circle cx="1171.5" cy="16" r="4.2" fill="none" stroke="#e0e0e0" stroke-width="1.2"/><circle cx="1176.3" cy="11.5" r="4.2" fill="none" stroke="#e0e0e0" stroke-width="1.2"/><circle cx="1174" cy="13.8" r="1.2" fill="#e0e0e0"/></svg>
<svg style="left:0;top:0" width="1" height="1"><path d="M1182.7 12.7 L1186.0 16.3 L1189.3 12.7" fill="none" stroke="#d0d0d0" stroke-width="1.45" stroke-linecap="round" stroke-linejoin="round"/></svg>
<div class="abs" style="left:1199.0px;top:4.4px;width:50.0px;height:19.2px;background:#232323;border-radius:4px"></div>
<div class="abs" style="left:1199.0px;top:4.4px;width:18.7px;height:19.2px;background:#545454;border-radius:4px 0 0 4px"></div>
<svg style="left:0;top:0" width="1" height="1"><g transform="translate(1208.5 14.5) rotate(45)"><path d="M-5 5.5 L-5 -1 A5 5 0 0 1 5 -1 L5 5.5 L2.2 5.5 L2.2 -1 A2.2 2.2 0 0 0 -2.2 -1 L-2.2 5.5 Z" fill="none" stroke="#b4b4b4" stroke-width="1.1" stroke-linejoin="round"/></g></svg>
<svg style="left:0;top:0" width="1" height="1"><path d="M1221 16.5 L1232 16.5 M1221 13.5 L1221 19.5 M1224.7 14.3 L1224.7 18.7 M1228.3 14.3 L1228.3 18.7 M1232 13.5 L1232 19.5" stroke="#e0e0e0" stroke-width="1.1"/><rect x="1230.5" y="7" width="4" height="4" fill="#e6e6e6"/></svg>
<svg style="left:0;top:0" width="1" height="1"><path d="M1239.7 12.7 L1243.0 16.3 L1246.3 12.7" fill="none" stroke="#d0d0d0" stroke-width="1.45" stroke-linecap="round" stroke-linejoin="round"/></svg>
<div class="abs" style="left:1255.8px;top:4.4px;width:50.0px;height:19.2px;background:#232323;border-radius:4px"></div>
<div class="abs" style="left:1255.8px;top:4.4px;width:18.7px;height:19.2px;background:#545454;border-radius:4px 0 0 4px"></div>
<svg style="left:0;top:0" width="1" height="1"><circle cx="1265" cy="14" r="5.6" fill="none" stroke="#8c8c8c" stroke-width="1.2"/><circle cx="1265" cy="14" r="2" fill="#a8a8a8"/></svg>
<svg style="left:0;top:0" width="1" height="1"><path d="M1278.5 19.5 C1283 19.5 1283 8.5 1286 8.5 C1289 8.5 1289 19.5 1293.5 19.5" fill="none" stroke="#a0a0a0" stroke-width="1.1"/></svg>
<svg style="left:0;top:0" width="1" height="1"><path d="M1297.2 13.0 L1300.0 16.0 L1302.8 13.0" fill="none" stroke="#5a5a5a" stroke-width="1.45" stroke-linecap="round" stroke-linejoin="round"/></svg>
<div class="abs" style="left:1324.0px;top:4.4px;width:30.0px;height:19.2px;background:#232323;border-radius:4px"></div>
<svg style="left:0;top:0" width="1" height="1"><path d="M1328.3 12.5 L1337.5 16 L1333.6 17.3 L1332 21.3 Z" fill="#e6e6e6"/><path d="M1329.5 10.2 C1332 6.6 1338 6.6 1340.7 10.2 C1338 13.8 1332 13.8 1329.5 10.2 Z" fill="#e6e6e6"/><circle cx="1335" cy="10.2" r="1.7" fill="#232323"/></svg>
<svg style="left:0;top:0" width="1" height="1"><path d="M1344.7 12.7 L1348.0 16.3 L1351.3 12.7" fill="none" stroke="#d0d0d0" stroke-width="1.45" stroke-linecap="round" stroke-linejoin="round"/></svg>
<div class="abs" style="left:1361.0px;top:4.4px;width:38.5px;height:19.2px;background:#232323;border-radius:4px"></div>
<div class="abs" style="left:1361.0px;top:4.4px;width:18.2px;height:19.2px;background:#4772b3;border-radius:4px 0 0 4px"></div>
<svg style="left:0;top:0" width="1" height="1"><path d="M1365.5 20 L1375.5 8.5 M1371.5 8 L1376 8 L1376 12.5" fill="none" stroke="#fff" stroke-width="1.2" stroke-linecap="round" stroke-linejoin="round"/><path d="M1365 11 C1371 11 1374.5 14.5 1374.5 20.5" fill="none" stroke="#fff" stroke-width="1.2" stroke-linecap="round"/><circle cx="1365.8" cy="19.7" r="1.9" fill="#4772b3" stroke="#fff" stroke-width="1.1"/></svg>
<svg style="left:0;top:0" width="1" height="1"><path d="M1386.0 12.5 L1389.5 16.5 L1393.0 12.5" fill="none" stroke="#d0d0d0" stroke-width="1.45" stroke-linecap="round" stroke-linejoin="round"/></svg>
<div class="abs" style="left:1405.6px;top:4.4px;width:38.1px;height:19.2px;background:#232323;border-radius:4px"></div>
<div class="abs" style="left:1405.6px;top:4.4px;width:18.4px;height:19.2px;background:#4772b3;border-radius:4px 0 0 4px"></div>
<svg style="left:0;top:0" width="1" height="1"><circle cx="1412.1" cy="16.4" r="4.5" fill="none" stroke="#ffffff" stroke-width="1.2"/><circle cx="1416.0" cy="12.3" r="6.3" fill="#4772b3"/><circle cx="1416.0" cy="12.3" r="5.3" fill="#ffffff"/><path d="M1413.3 12.8 A3.2 3.2 0 0 1 1416.7 16" fill="none" stroke="#4772b3" stroke-width="1.2"/></svg>
<svg style="left:0;top:0" width="1" height="1"><path d="M1430.5 12.5 L1434.0 16.5 L1437.5 12.5" fill="none" stroke="#d0d0d0" stroke-width="1.45" stroke-linecap="round" stroke-linejoin="round"/></svg>
<div class="abs" style="left:1450.8px;top:4.4px;width:17.8px;height:19.2px;background:#363636;border-radius:4px"></div>
<svg style="left:0;top:0" width="1" height="1"><rect x="1454.5" y="11" width="8" height="8.5" fill="none" stroke="#5c5c5c" stroke-width="1.1"/><path d="M1457.5 11 L1457.5 8.5 L1465 8.5 L1465 16.5 L1462.5 16.5" fill="none" stroke="#5c5c5c" stroke-width="1.1"/></svg>
<div class="abs" style="left:1475.7px;top:4.4px;width:96.3px;height:19.2px;background:#232323;border-radius:4px 0 0 4px"></div>
<div class="abs" style="left:1475.7px;top:4.4px;width:76.2px;height:19.2px;background:#545454;border-radius:4px 0 0 4px"></div>
<div class="abs" style="left:1513.7px;top:4.4px;width:19.0px;height:19.2px;background:#4772b3;"></div>
<div class="abs" style="left:1494.2px;top:4.4px;width:1.0px;height:19.2px;background:#3e3e3e;"></div>
<div class="abs" style="left:1532.7px;top:4.4px;width:1.0px;height:19.2px;background:#3e3e3e;"></div>
<svg style="left:0;top:0" width="1" height="1"><circle cx="1485" cy="14" r="6" fill="none" stroke="#d0d0d0" stroke-width="1.1"/><ellipse cx="1485" cy="14" rx="2.8" ry="6" fill="none" stroke="#d0d0d0" stroke-width="1"/><path d="M1479 14 L1491 14" stroke="#d0d0d0" stroke-width="1"/></svg>
<svg style="left:0;top:0" width="1" height="1"><circle cx="1504" cy="14" r="6.4" fill="#c4c4c4"/></svg>
<svg style="left:0;top:0" width="1" height="1"><circle cx="1523" cy="14" r="6" fill="none" stroke="#fff" stroke-width="1.2"/><path d="M1523 8 A6 6 0 0 0 1523 20 A9 9 0 0 0 1528.8 15.5 L1523 14 Z" fill="#fff"/></svg>
<svg style="left:0;top:0" width="1" height="1"><circle cx="1542" cy="14" r="6" fill="none" stroke="#cfcfcf" stroke-width="1.2"/><path d="M1538 11.5 A4.5 4.5 0 0 1 1543 9.7" fill="none" stroke="#cfcfcf" stroke-width="1.3" stroke-linecap="round"/><path d="M1546.8 13.5 A5 5 0 0 1 1541 18.8" fill="none" stroke="#9a9a9a" stroke-width="1.8" stroke-linecap="round"/></svg>
<svg style="left:0;top:0" width="1" height="1"><path d="M1557.5 12.5 L1561.0 16.5 L1564.5 12.5" fill="none" stroke="#d0d0d0" stroke-width="1.45" stroke-linecap="round" stroke-linejoin="round"/></svg>
<div class="abs" style="left:864.0px;top:29.8px;width:94.5px;height:18.2px;background:#575757;border-radius:3px;opacity:.92"></div>
<div class="abs" style="left:864.0px;top:29.8px;width:18.3px;height:18.2px;background:#4772b3;border-radius:3px 0 0 3px"></div>
<svg style="left:0;top:0" width="1" height="1"><path d="M866.4 32.6 L879.6 32.6 M879.6 45.2 L866.4 45.2" fill="none" stroke="#fff" stroke-width="1.2" stroke-dasharray="1.8 1.6 2.4 1.6 2.4 1.6 1.8 0"/><path d="M879.6 32.6 L879.6 45.2 M866.4 45.2 L866.4 32.6" fill="none" stroke="#fff" stroke-width="1.2" stroke-dasharray="1.8 1.4 2.4 1.4 2.4 1.4 1.8 0"/></svg>
<div class="abs" style="left:882.4px;top:29.8px;width:1.0px;height:18.2px;background:#3f3f3f;"></div>
<div class="abs" style="left:901.3px;top:29.8px;width:1.0px;height:18.2px;background:#3f3f3f;"></div>
<div class="abs" style="left:920.2px;top:29.8px;width:1.0px;height:18.2px;background:#3f3f3f;"></div>
<div class="abs" style="left:939.1px;top:29.8px;width:1.0px;height:18.2px;background:#3f3f3f;"></div>
<svg style="left:0;top:0" width="1" height="1"><path d="M891.5 32.5 L899 32.5 L899 41 L894.5 41 L894.5 45.5 L885.5 45.5 L885.5 37 L891.5 37 Z" fill="#d4d4d4"/></svg>
<svg style="left:0;top:0" width="1" height="1"><path d="M910 33 L917.5 33 L917.5 41 L913.5 41 L913.5 37 L910 37 Z" fill="#d4d4d4"/><rect x="904.5" y="37.5" width="8.5" height="8" fill="none" stroke="#d4d4d4" stroke-width="1" stroke-dasharray="1.6 1.2"/></svg>
<svg style="left:0;top:0" width="1" height="1"><path d="M927.5 32.5 L937 32.5 L937 41.5 L932.5 41.5 L932.5 37 L927.5 37 Z M923.5 37 L927.5 37 L927.5 41.5 L932.5 41.5 L932.5 45.5 L923.5 45.5 Z" fill="#d4d4d4"/></svg>
<svg style="left:0;top:0" width="1" height="1"><rect x="943" y="33" width="13" height="12.5" fill="none" stroke="#d4d4d4" stroke-width="1" stroke-dasharray="1.8 1.3"/><rect x="946.5" y="36.5" width="6" height="5.5" fill="#d4d4d4"/></svg>
<div class="abs" style="left:1500.0px;top:28.0px;width:72.0px;height:22.0px;background:#373737;border-radius:0 0 0 5px"></div>
<div class="abs" style="left:1508.0px;top:30.0px;width:64.0px;height:17.5px;background:#2b2b2b;border-radius:4px 0 0 4px"></div>
<div class="t" style="left:1514.5px;top:35.47px;font-size:10.71px;color:#e4e4e4;-webkit-text-stroke:0.27px;transform:scaleX(1.111);transform-origin:left center;">Options</div>
<svg style="left:0;top:0" width="1" height="1"><path d="M1561.5 37.5 L1565.0 41.5 L1568.5 37.5" fill="none" stroke="#d0d0d0" stroke-width="1.45" stroke-linecap="round" stroke-linejoin="round"/></svg>
<div class="t" style="left:920.0px;top:63.67px;font-size:10.30px;color:#ffffff;-webkit-text-stroke:0.25px;transform:scaleX(1.111);transform-origin:left center;text-shadow:0 0 2px #000,0 1px 1px rgba(0,0,0,.8);-webkit-text-stroke:0.35px #fff">User Perspective</div>
<div class="t" style="left:920.0px;top:81.67px;font-size:10.30px;color:#ffffff;-webkit-text-stroke:0.25px;transform:scaleX(1.111);transform-origin:left center;text-shadow:0 0 2px #000,0 1px 1px rgba(0,0,0,.8);-webkit-text-stroke:0.35px #fff">(56) Collection | Plane</div>
<div class="abs" style="left:864.0px;top:61.0px;width:38.0px;height:33.3px;background:#4772b3;border-radius:4px 4px 0 0"></div>
<svg style="left:0;top:0" width="1" height="1"><path d="M899.5 88.8 L899.5 91.8 L896.5 91.8 Z" fill="#8a8a8a"/></svg>
<svg style="left:0;top:0" width="1" height="1"><rect x="872.5" y="66.4" width="21.2" height="21" fill="none" stroke="#f5b332" stroke-width="1.2" stroke-dasharray="4 2.2"/><path d="M879.8 73.2 L888.5 78.7 L883.6 79.3 L881.2 83.4 Z" fill="#e8e8e8"/></svg>
<div class="abs" style="left:864.0px;top:95.0px;width:38.0px;height:33.7px;background:#2a2a2a;border-radius:0 0 4px 4px"></div>
<svg style="left:0;top:0" width="1" height="1"><circle cx="883" cy="112" r="11.2" fill="none" stroke="#e8e8e8" stroke-width="1.6"/><circle cx="883" cy="112" r="11.2" fill="none" stroke="#b5364a" stroke-width="1.6" stroke-dasharray="4.4 4.4"/><path d="M883 104 L883 109.3 M883 114.7 L883 120 M875 112 L880.3 112 M885.7 112 L891 112" stroke="#cfcfcf" stroke-width="1.3"/></svg>
<div class="abs" style="left:864.0px;top:136.0px;width:38.0px;height:34.5px;background:#2a2a2a;border-radius:4px 4px 0 0"></div>
<svg style="left:0;top:0" width="1" height="1"><path d="M883 141 L880 145.5 L886 145.5 Z M883 163 L880 158.5 L886 158.5 Z M872 152 L876.5 149 L876.5 155 Z M894 152 L889.5 149 L889.5 155 Z" fill="#e6e6e6"/><path d="M883 145.5 L883 149.5 M883 158.5 L883 154.5 M876.5 152 L880.5 152 M889.5 152 L885.5 152" stroke="#e6e6e6" stroke-width="1.4" stroke-dasharray="2 1.2"/></svg>
<div class="abs" style="left:864.0px;top:171.3px;width:38.0px;height:34.2px;background:#2a2a2a;border-radius:0"></div>
<svg style="left:0;top:0" width="1" height="1"><path d="M874.5 183.5 A9.3 9.3 0 0 1 891.5 183.5" fill="none" stroke="#e6e6e6" stroke-width="1.4"/><path d="M890.5 192.5 A9.3 9.3 0 0 1 875.5 192.5" fill="none" stroke="#e6e6e6" stroke-width="1.4"/><path d="M871.5 185.5 L877.5 185.5 L874.5 190 Z M894.5 189.5 L888.5 189.5 L891.5 184.5 Z" fill="#e6e6e6"/><path d="M883 183.4 L886.6 187 L883 190.6 L879.4 187 Z" fill="#cfcfcf"/></svg>
<div class="abs" style="left:864.0px;top:206.3px;width:38.0px;height:34.2px;background:#2a2a2a;border-radius:0"></div>
<svg style="left:0;top:0" width="1" height="1"><path d="M899.5 235.0 L899.5 238.0 L896.5 238.0 Z" fill="#8a8a8a"/></svg>
<svg style="left:0;top:0" width="1" height="1"><rect x="874" y="222.5" width="9.5" height="9" fill="#e6e6e6"/><path d="M876.5 220 L876.5 214.5 L891.5 214.5 L891.5 229.5 L886 229.5" fill="none" stroke="#cfcfcf" stroke-width="1.2"/><path d="M883.5 222.5 L889 217 M885.5 216.8 L889.2 216.8 L889.2 220.5" fill="none" stroke="#e6e6e6" stroke-width="1.2"/></svg>
<div class="abs" style="left:864.0px;top:241.3px;width:38.0px;height:32.5px;background:#2a2a2a;border-radius:0 0 4px 4px"></div>
<svg style="left:0;top:0" width="1" height="1"><circle cx="883" cy="257" r="10" fill="none" stroke="#e6e6e6" stroke-width="1.3" stroke-dasharray="5.2 2.6" stroke-dashoffset="2.6"/><rect x="879" y="253" width="8" height="8" fill="#e6e6e6"/><path d="M883 247 L880.6 250.5 L885.4 250.5 Z M883 267 L880.6 263.5 L885.4 263.5 Z M873 257 L876.5 254.6 L876.5 259.4 Z M893 257 L889.5 254.6 L889.5 259.4 Z" fill="#e6e6e6"/></svg>
<div class="abs" style="left:864.0px;top:281.0px;width:38.0px;height:33.0px;background:#2a2a2a;border-radius:4px 4px 0 0"></div>
<svg style="left:0;top:0" width="1" height="1"><path d="M899.5 308.5 L899.5 311.5 L896.5 311.5 Z" fill="#8a8a8a"/></svg>
<svg style="left:0;top:0" width="1" height="1"><g transform="translate(879.3 294.6) rotate(45)"><rect x="-2.3" y="-11" width="4.6" height="3" fill="#e6e6e6"/><rect x="-2.3" y="-7" width="4.6" height="13" fill="#e6e6e6"/><path d="M-2.3 7 L2.3 7 L0 10.6 Z" fill="#e6e6e6"/></g><path d="M872 304.5 C875.5 308.5 879.5 306.5 883.5 303 C887.5 299.8 892.5 300 896 305.5" fill="none" stroke="#7fd1a6" stroke-width="1.4"/></svg>
<div class="abs" style="left:864.0px;top:314.8px;width:38.0px;height:33.8px;background:#2a2a2a;border-radius:0 0 4px 4px"></div>
<svg style="left:0;top:0" width="1" height="1"><path d="M877.5 340.5 L877.5 328.5 A14 14 0 0 1 891.5 340.5 Z" fill="#7fd1a6"/><path d="M874 343.5 L874 320.5 L877.5 320.5 L877.5 340.5 L894.5 340.5 L894.5 343.5 Z" fill="#e6e6e6"/><path d="M874 324 L876 324 M874 327.5 L876 327.5 M874 331 L876 331 M874 334.5 L876 334.5 M874 338 L876 338 M881 343.5 L881 341.5 M884.5 343.5 L884.5 341.5 M888 343.5 L888 341.5 M891.5 343.5 L891.5 341.5" stroke="#2a2a2a" stroke-width="0.8"/></svg>
<div class="abs" style="left:864.0px;top:356.0px;width:38.0px;height:32.7px;background:#2a2a2a;border-radius:4px"></div>
<svg style="left:0;top:0" width="1" height="1"><path d="M899.5 383.2 L899.5 386.2 L896.5 386.2 Z" fill="#8a8a8a"/></svg>
<svg style="left:0;top:0" width="1" height="1"><path d="M870.5 362 L877.5 362 M874 358.5 L874 365.5" stroke="#7fd1a6" stroke-width="1.6"/><path d="M876 368.5 L889 368.5 L889 382.5 L876 382.5 Z M876 368.5 L880.5 364.5 L893.5 364.5 L889 368.5 M893.5 364.5 L893.5 378 L889 382.5" fill="none" stroke="#7fd1a6" stroke-width="1.1" stroke-linejoin="round"/></svg>
<svg style="left:0;top:0" width="1" height="1"><path d="M1529.3 101.6 L1517.2 75.2" stroke="#d93650" stroke-width="2.2"/><path d="M1529.3 101.6 L1501.5 112.9" stroke="#7bc41a" stroke-width="2.4" stroke-linecap="round"/><circle cx="1558.5" cy="90.1" r="7" fill="#55702a" stroke="#7bc41a" stroke-width="1.3"/><circle cx="1528.9" cy="112.1" r="6.6" fill="#3a4656" stroke="#3f6fb3" stroke-width="1.3"/><circle cx="1541.2" cy="130" r="7.3" fill="#7a3746" stroke="#e0405b" stroke-width="1.3"/><circle cx="1516.5" cy="73.9" r="7.7" fill="#d93650"/><circle cx="1499.4" cy="113.8" r="7.9" fill="#7bc41a"/><circle cx="1528.9" cy="91.8" r="8" fill="#2e8cf0"/></svg>
<div class="t" style="left:1508.5px;width:16px;text-align:center;top:68.54px;font-size:11.8px;font-weight:bold;color:#3c0a14;transform:scaleX(0.92)">X</div>
<div class="t" style="left:1491.4px;width:16px;text-align:center;top:108.44px;font-size:11.8px;font-weight:bold;color:#1c2e06;transform:scaleX(0.92)">Y</div>
<div class="t" style="left:1520.9px;width:16px;text-align:center;top:86.44px;font-size:11.8px;font-weight:bold;color:#0a2244;transform:scaleX(0.92)">Z</div>
<svg style="left:0;top:0" width="1" height="1"><circle cx="1557.7" cy="156.4" r="13.7" fill="#2e2e2e" opacity="0.92"/></svg>
<svg style="left:0;top:0" width="1" height="1"><circle cx="1557.7" cy="186.6" r="13.7" fill="#2e2e2e" opacity="0.92"/></svg>
<svg style="left:0;top:0" width="1" height="1"><circle cx="1557.7" cy="216.8" r="13.7" fill="#2e2e2e" opacity="0.92"/></svg>
<svg style="left:0;top:0" width="1" height="1"><circle cx="1557.7" cy="246.5" r="13.7" fill="#2e2e2e" opacity="0.92"/></svg>
<svg style="left:0;top:0" width="1" height="1"><circle cx="1559.8" cy="154.3" r="6.3" fill="#e8e8e8"/><path d="M1555.3 158.9 L1550.3 163.9" stroke="#e8e8e8" stroke-width="2.6" stroke-linecap="round"/><path d="M1556.6 154.3 L1563 154.3 M1559.8 151.1 L1559.8 157.5" stroke="#2a2a2a" stroke-width="1.1"/></svg>
<svg style="left:0;top:0" width="1" height="1"><path d="M1552.2 186.5 C1551 184 1549.7 182.6 1551.2 181.8 C1552.5 181.2 1553.7 183.5 1554.5 185 L1554 179.5 C1554 178 1556 178 1556.2 179.5 L1556.8 184 L1557.2 178.3 C1557.3 176.8 1559.4 176.8 1559.4 178.3 L1559.5 184 L1560.6 179.3 C1561 177.9 1562.9 178.3 1562.7 179.8 L1562 185 L1563.7 182.3 C1564.5 181.2 1566 182 1565.5 183.3 C1564.5 186 1564 189 1562.5 192 C1561 194.8 1556.3 194.8 1554.7 192 C1553.7 190.3 1553 188.3 1552.2 186.5 Z" fill="#e8e8e8"/></svg>
<svg style="left:0;top:0" width="1" height="1"><rect x="1549.3" y="208.2" width="15.2" height="7.2" rx="3.6" fill="none" stroke="#e8e8e8" stroke-width="1.3"/><circle cx="1553" cy="211.8" r="1" fill="#e8e8e8"/><circle cx="1560.7" cy="211.8" r="1.2" fill="#e8e8e8"/><rect x="1552.3" y="217.6" width="8.4" height="6" fill="none" stroke="#e8e8e8" stroke-width="1.3"/><path d="M1562.2 220.6 L1566 218 L1566 223.2 Z" fill="#e8e8e8"/><path d="M1547.8 220.6 L1550.6 220.6" stroke="#e8e8e8" stroke-width="1"/></svg>
<svg style="left:0;top:0" width="1" height="1"><path d="M1552.5 239.5 L1563 239.5 L1566 253.5 L1549.5 253.5 Z M1551.6 244 L1564 244 M1550.6 248.5 L1565 248.5 M1556 239.5 L1555 253.5 M1559.5 239.5 L1560.5 253.5" fill="none" stroke="#e8e8e8" stroke-width="1.3" stroke-linejoin="round"/></svg>
<div class="abs" style="left:2.5px;top:483.3px;width:31.5px;height:19.3px;background:#282828;border:1px solid #3a3a3a;border-radius:4px"></div>
<svg style="left:0;top:0" width="1" height="1"><circle cx="8.4" cy="487.4" r="1.7" fill="#9a9a9a"/><circle cx="13.3" cy="488.4" r="2.1" fill="#b0b0b0"/><circle cx="10.3" cy="493.0" r="2.7" fill="#cfcfcf"/><circle cx="18.2" cy="496.2" r="4.0" fill="#ffffff"/></svg>
<svg style="left:0;top:0" width="1" height="1"><path d="M23.4 491.5 L27.0 495.5 L30.6 491.5" fill="none" stroke="#d0d0d0" stroke-width="1.45" stroke-linecap="round" stroke-linejoin="round"/></svg>
<div class="abs" style="left:39.0px;top:483.3px;width:79.0px;height:19.3px;background:#282828;border:1px solid #3a3a3a;border-radius:4px"></div>
<div class="t" style="left:46.5px;top:487.97px;font-size:10.71px;color:#dddddd;-webkit-text-stroke:0.27px;transform:scaleX(1.111);transform-origin:left center;">Modifier</div>
<svg style="left:0;top:0" width="1" height="1"><path d="M107.5 491.5 L111.0 495.5 L114.5 491.5" fill="none" stroke="#d0d0d0" stroke-width="1.45" stroke-linecap="round" stroke-linejoin="round"/></svg>
<div class="t" style="left:130.0px;top:487.97px;font-size:10.71px;color:#dddddd;-webkit-text-stroke:0.27px;transform:scaleX(1.111);transform-origin:left center;">View</div>
<div class="t" style="left:170.0px;top:487.97px;font-size:10.71px;color:#dddddd;-webkit-text-stroke:0.27px;transform:scaleX(1.111);transform-origin:left center;">Select</div>
<div class="t" style="left:217.0px;top:487.97px;font-size:10.71px;color:#dddddd;-webkit-text-stroke:0.27px;transform:scaleX(1.111);transform-origin:left center;">Add</div>
<div class="t" style="left:253.0px;top:487.97px;font-size:10.71px;color:#dddddd;-webkit-text-stroke:0.27px;transform:scaleX(1.111);transform-origin:left center;">Node</div>
<div class="abs" style="left:658.5px;top:483.3px;width:210.5px;height:19.3px;background:#282828;border:1px solid #3a3a3a;border-radius:4px"></div>
<svg style="left:0;top:0" width="1" height="1"><rect x="663.5" y="486.0" width="8.5" height="6.0" rx="1.3" fill="#e0e0e0"/><rect x="663.0" y="494.0" width="8.5" height="6.0" rx="1.3" fill="#e0e0e0"/><path d="M663.5 489.4 L672.0 489.4 M663.0 497.4 L671.5 497.4" stroke="#1d1d1d" stroke-width="0.7"/><path d="M673.5 488.0 L676.3 488.0 L676.3 498.0 L673.0 498.0" fill="none" stroke="#e0e0e0" stroke-width="1.1"/></svg>
<svg style="left:0;top:0" width="1" height="1"><path d="M680.2 492.2 L683.5 495.8 L686.8 492.2" fill="none" stroke="#d0d0d0" stroke-width="1.45" stroke-linecap="round" stroke-linejoin="round"/></svg>
<div class="abs" style="left:689.5px;top:484.3px;width:119.5px;height:17.3px;background:#1d1d1d;"></div>
<div class="t" style="left:696.5px;top:487.97px;font-size:10.71px;color:#dddddd;-webkit-text-stroke:0.27px;transform:scaleX(1.111);transform-origin:left center;">Geometry Nodes</div>
<div class="abs" style="left:809.0px;top:484.3px;width:59.0px;height:17.3px;background:#545454;border-radius:0 3px 3px 0"></div>
<div class="abs" style="left:829.0px;top:484.3px;width:1.0px;height:17.3px;background:#3e3e3e;"></div>
<div class="abs" style="left:849.0px;top:484.3px;width:1.0px;height:17.3px;background:#3e3e3e;"></div>
<svg style="left:0;top:0" width="1" height="1"><path d="M819.5 486.5 C822.0 488 824.0 488.2 825.5 488.2 C825.5 494 823.5 497.5 819.5 500 C815.5 497.5 813.5 494 813.5 488.2 C815.0 488.2 817.0 488 819.5 486.5 Z" fill="none" stroke="#c8c8c8" stroke-width="1.2"/></svg>
<svg style="left:0;top:0" width="1" height="1"><path d="M837.5 486.5 L843.5 486.5 L846.5 489.5 L846.5 496.5 L837.5 496.5 Z" fill="none" stroke="#e6e6e6" stroke-width="1.3"/><path d="M843.2 486.5 L843.2 489.8 L846.5 489.8 Z" fill="#e6e6e6"/><path d="M835.5 489.5 L833.5 489.5 L833.5 499.5 L842.5 499.5 L842.5 498" fill="none" stroke="#e6e6e6" stroke-width="1.3"/></svg>
<svg style="left:0;top:0" width="1" height="1"><path d="M855.7 489.2 L863.3 496.8 M863.3 489.2 L855.7 496.8" stroke="#e0e0e0" stroke-width="1.3" stroke-linecap="round"/></svg>
<svg style="left:0;top:0" width="1" height="1"><g transform="translate(884.5 493) rotate(45)"><path d="M-2.6 -7.5 L2.6 -7.5 L2.6 -6 L1.8 -6 L1.8 -1.5 L4.2 1 L4.2 2 L-4.2 2 L-4.2 1 L-1.8 -1.5 L-1.8 -6 L-2.6 -6 Z" fill="none" stroke="#c0c0c0" stroke-width="1.1" stroke-linejoin="round"/><path d="M0 2 L0 8.5" stroke="#c0c0c0" stroke-width="1.1" stroke-linecap="round"/></g></svg>
<div class="abs" style="left:1451.5px;top:483.3px;width:19.0px;height:19.3px;background:#303030;border-radius:4px"></div>
<svg style="left:0;top:0" width="1" height="1"><path d="M1457 490.5 L1460.5 487 L1464 490.5 M1460.5 487 L1460.5 498.5 L1467 498.5" fill="none" stroke="#5e5e5e" stroke-width="1.2" stroke-linecap="round" stroke-linejoin="round"/></svg>
<div class="abs" style="left:1476.5px;top:483.3px;width:51.5px;height:19.3px;background:#282828;border:1px solid #3a3a3a;border-radius:4px"></div>
<div class="abs" style="left:1477.5px;top:484.3px;width:18.5px;height:17.3px;background:#545454;border-radius:3px 0 0 3px"></div>
<svg style="left:0;top:0" width="1" height="1"><g transform="translate(1486.5 493.5) rotate(45)"><path d="M-5 5.5 L-5 -1 A5 5 0 0 1 5 -1 L5 5.5 L2.2 5.5 L2.2 -1 A2.2 2.2 0 0 0 -2.2 -1 L-2.2 5.5 Z" fill="none" stroke="#b4b4b4" stroke-width="1.1" stroke-linejoin="round"/></g></svg>
<svg style="left:0;top:0" width="1" height="1"><path d="M1504.0 492.0 L1504.0 500.0 M1511.0 485.9 L1511.0 500.0 M1506.5 489.5 L1514.5 489.5 M1500.4 496.5 L1514.5 496.5" stroke="#dcdcdc" stroke-width="1.1"/><rect x="1501.4" y="486.8" width="4.9" height="4.9" fill="#ececec"/></svg>
<svg style="left:0;top:0" width="1" height="1"><path d="M1518.2 491.7 L1521.5 495.3 L1524.8 491.7" fill="none" stroke="#d0d0d0" stroke-width="1.45" stroke-linecap="round" stroke-linejoin="round"/></svg>
<div class="abs" style="left:1533.5px;top:483.3px;width:38.5px;height:19.3px;background:#282828;border:1px solid #3a3a3a;border-radius:4px 0 0 4px;border-right:none"></div>
<div class="abs" style="left:1534.5px;top:484.3px;width:18.0px;height:17.3px;background:#4772b3;border-radius:3px 0 0 3px"></div>
<svg style="left:0;top:0" width="1" height="1"><circle cx="1540.6" cy="495.4" r="4.5" fill="none" stroke="#ffffff" stroke-width="1.2"/><circle cx="1544.5" cy="491.3" r="6.3" fill="#4772b3"/><circle cx="1544.5" cy="491.3" r="5.3" fill="#ffffff"/><path d="M1541.8 491.8 A3.2 3.2 0 0 1 1545.2 495" fill="none" stroke="#4772b3" stroke-width="1.2"/></svg>
<svg style="left:0;top:0" width="1" height="1"><path d="M1559.0 491.5 L1562.5 495.5 L1566.0 491.5" fill="none" stroke="#d0d0d0" stroke-width="1.45" stroke-linecap="round" stroke-linejoin="round"/></svg>
<svg style="left:0;top:0" width="1" height="1"><path d="M13.4 522.8 L13.4 520.4 L15.8 520.4 M13.4 531.2 L13.4 533.6 L15.8 533.6 M26.6 522.8 L26.6 520.4 L24.2 520.4 M26.6 531.2 L26.6 533.6 L24.2 533.6 " fill="none" stroke="#d8d8d8" stroke-width="1.1"/><rect x="16.0" y="523.0" width="8.0" height="8.0" fill="#d8d8d8"/></svg>
<div class="t" style="left:36.0px;top:522.47px;font-size:10.71px;color:#dddddd;-webkit-text-stroke:0.27px;transform:scaleX(1.111);transform-origin:left center;">Plane</div>
<svg style="left:0;top:0" width="1" height="1"><path d="M80.9 523.2 L85.1 527.5 L80.9 531.8" fill="none" stroke="#d0d0d0" stroke-width="1.3" stroke-linecap="round" stroke-linejoin="round"/></svg>
<svg style="left:0;top:0" width="1" height="1"><circle cx="97.8" cy="521.5" r="1.7" fill="#9a9a9a"/><circle cx="102.5" cy="522.5" r="2.1" fill="#b0b0b0"/><circle cx="99.6" cy="527.0" r="2.6" fill="#cfcfcf"/><circle cx="107.3" cy="530.2" r="4.0" fill="#ffffff"/></svg>
<div class="t" style="left:119.0px;top:522.47px;font-size:10.71px;color:#dddddd;-webkit-text-stroke:0.27px;transform:scaleX(1.111);transform-origin:left center;">GeometryNodes</div>
<svg style="left:0;top:0" width="1" height="1"><path d="M220.9 523.2 L225.1 527.5 L220.9 531.8" fill="none" stroke="#d0d0d0" stroke-width="1.3" stroke-linecap="round" stroke-linejoin="round"/></svg>
<svg style="left:0;top:0" width="1" height="1"><rect x="236.5" y="520.0" width="8.5" height="6.0" rx="1.3" fill="#e0e0e0"/><rect x="236.0" y="528.0" width="8.5" height="6.0" rx="1.3" fill="#e0e0e0"/><path d="M236.5 523.4 L245.0 523.4 M236.0 531.4 L244.5 531.4" stroke="#1d1d1d" stroke-width="0.7"/><path d="M246.5 522.0 L249.3 522.0 L249.3 532.0 L246.0 532.0" fill="none" stroke="#e0e0e0" stroke-width="1.1"/></svg>
<div class="t" style="left:259.0px;top:522.47px;font-size:10.71px;color:#dddddd;-webkit-text-stroke:0.27px;transform:scaleX(1.111);transform-origin:left center;">Geometry Nodes</div>
<div class="abs" style="left:0.0px;top:508.0px;width:1.5px;height:409.0px;background:#151515;"></div>
<div class="abs" style="left:0px;top:540px;width:1572px;height:377px;background-image:radial-gradient(circle at 1.35px 1.35px,#282828 0.85px,transparent 1.45px);background-size:53.05px 53.05px;background-position:4.6px 13.4px"></div>
<svg style="left:0;top:0" width="1" height="1"><path d="M326.0 579.0 C334.0 579.0 367.0 584.7 375.0 584.7" fill="none" stroke="#111" stroke-width="3.2" opacity="0.55"/><path d="M326.0 579.0 C334.0 579.0 367.0 584.7 375.0 584.7" fill="none" stroke="#00d6a3" stroke-width="1.8"/></svg>
<svg style="left:0;top:0" width="1" height="1"><path d="M448.0 571.7 C463.0 571.7 550.8 575.0 565.8 575.0" fill="none" stroke="#111" stroke-width="3.2" opacity="0.55"/><path d="M448.0 571.7 C463.0 571.7 550.8 575.0 565.8 575.0" fill="none" stroke="#00d6a3" stroke-width="1.8"/></svg>
<svg style="left:0;top:0" width="1" height="1"><path d="M638.8 562.0 C678.8 562.0 971.7 560.0 1011.7 560.0" fill="none" stroke="#111" stroke-width="3.2" opacity="0.55"/><path d="M638.8 562.0 C678.8 562.0 971.7 560.0 1011.7 560.0" fill="none" stroke="#00d6a3" stroke-width="1.8"/></svg>
<svg style="left:0;top:0" width="1" height="1"><path d="M861.0 639.8 C869.0 639.8 891.4 637.4 899.4 637.4" fill="none" stroke="#111" stroke-width="3.2" opacity="0.55"/><path d="M861.0 639.8 C869.0 639.8 891.4 637.4 899.4 637.4" fill="none" stroke="#00d6a3" stroke-width="1.8"/></svg>
<svg style="left:0;top:0" width="1" height="1"><path d="M899.4 637.4 C954.4 637.4 956.7 583.3 1011.7 583.3" fill="none" stroke="#111" stroke-width="3.2" opacity="0.55"/><path d="M899.4 637.4 C954.4 637.4 956.7 583.3 1011.7 583.3" fill="none" stroke="#00d6a3" stroke-width="1.8"/></svg>
<svg style="left:0;top:0" width="1" height="1"><path d="M1085.0 546.9 C1121.0 546.9 1122.0 595.0 1158.0 595.0" fill="none" stroke="#111" stroke-width="3.2" opacity="0.55"/><path d="M1085.0 546.9 C1121.0 546.9 1122.0 595.0 1158.0 595.0" fill="none" stroke="#00d6a3" stroke-width="1.8"/></svg>
<svg style="left:0;top:0" width="1" height="1"><path d="M1230.9 582.0 C1268.9 582.0 1271.8 614.2 1309.8 614.2" fill="none" stroke="#111" stroke-width="3.2" opacity="0.55"/><path d="M1230.9 582.0 C1268.9 582.0 1271.8 614.2 1309.8 614.2" fill="none" stroke="#00d6a3" stroke-width="1.8"/></svg>
<svg style="left:0;top:0" width="1" height="1"><path d="M506.0 655.8 C534.0 655.8 537.8 610.0 565.8 610.0" fill="none" stroke="#6363c7" stroke-width="1.0"/></svg>
<svg style="left:0;top:0" width="1" height="1"><defs><linearGradient id="yv" x1="386" y1="0" x2="433" y2="0" gradientUnits="userSpaceOnUse"><stop offset="0" stop-color="#c7c729"/><stop offset="1" stop-color="#6363c7"/></linearGradient></defs><path d="M386 677 C398 677 421 683 433 683" fill="none" stroke="url(#yv)" stroke-width="1.1" stroke-dasharray="3 1.6"/></svg>
<svg style="left:0;top:0" width="1" height="1"><path d="M269.8 737.0 C279.8 737.0 302.0 741.0 312.0 741.0" fill="none" stroke="#111" stroke-width="2.9" opacity="0.55"/><path d="M269.8 737.0 C279.8 737.0 302.0 741.0 312.0 741.0" fill="none" stroke="#b0b0b0" stroke-width="1.5"/></svg>
<svg style="left:0;top:0" width="1" height="1"><path d="M593.2 779.0 C613.2 779.0 613.3 815.7 633.3 815.7" fill="none" stroke="#598c5c" stroke-width="1.0" stroke-dasharray="3 1.2"/></svg>
<svg style="left:0;top:0" width="1" height="1"><path d="M707.0 776.6 C727.0 776.6 727.0 805.0 747.0 805.0" fill="none" stroke="#6363c7" stroke-width="1.0" stroke-dasharray="3 1.2"/></svg>
<svg style="left:0;top:0" width="1" height="1"><path d="M613.2 864.7 C623.2 864.7 623.3 827.5 633.3 827.5" fill="none" stroke="#6363c7" stroke-width="1.0" stroke-dasharray="3 1.2"/></svg>
<svg style="left:0;top:0" width="1" height="1"><path d="M613.2 864.7 C643.2 864.7 708.9 864.7 738.9 864.7" fill="none" stroke="#6363c7" stroke-width="1.0" stroke-dasharray="3 1.2"/></svg>
<svg style="left:0;top:0" width="1" height="1"><path d="M738.9 864.7 C742.9 864.7 743.0 817.0 747.0 817.0" fill="none" stroke="#6363c7" stroke-width="1.0" stroke-dasharray="3 1.2"/></svg>
<svg style="left:0;top:0" width="1" height="1"><path d="M820.0 779.0 C833.0 779.0 834.0 792.0 847.0 792.0" fill="none" stroke="#a1a1a1" stroke-width="1.0" stroke-dasharray="3 1.2"/></svg>
<svg style="left:0;top:0" width="1" height="1"><path d="M921.0 752.8 C935.0 752.8 962.8 745.2 976.8 745.2" fill="none" stroke="#a1a1a1" stroke-width="1.0" stroke-dasharray="3 1.2"/></svg>
<svg style="left:0;top:0" width="1" height="1"><defs><linearGradient id="gv" x1="0" y1="745" x2="0" y2="662" gradientUnits="userSpaceOnUse"><stop offset="0" stop-color="#a1a1a1"/><stop offset="0.45" stop-color="#a1a1a1"/><stop offset="1" stop-color="#6363c7"/></linearGradient></defs><path d="M976.8 745.2 C994 745 994 662.3 1011.7 662.3" fill="none" stroke="url(#gv)" stroke-width="1.0" stroke-dasharray="3 1.2"/></svg>
<svg style="left:0;top:0" width="1" height="1"><circle cx="899.4" cy="637.4" r="2.0" fill="#00d6a3" stroke="#141414" stroke-width="0.6"/></svg>
<svg style="left:0;top:0" width="1" height="1"><path d="M736.5 864.7 L738.9 862.3 L741.3 864.7 L738.9 867.1 Z" fill="#6363c7" stroke="#141414" stroke-width="0.6"/></svg>
<svg style="left:0;top:0" width="1" height="1"><path d="M974.4 745.2 L976.8 742.8 L979.2 745.2 L976.8 747.6 Z" fill="#a1a1a1" stroke="#141414" stroke-width="0.6"/></svg>
<div class="node" style="left:252.7px;top:560.7px;width:73.3px;height:37.3px;border-radius:2.6px"><div class="nh" style="height:10.3px;background:#1b1b1b;border-radius:2.6px 2.6px 0 0"></div></div>
<svg style="left:0;top:0" width="1" height="1"><path d="M258.6 564.9 L260.9 567.4 L263.1 564.9" fill="none" stroke="#d0d0d0" stroke-width="0.7876470588235295" stroke-linecap="round" stroke-linejoin="round"/></svg>
<div class="t" style="left:266.6px;top:563.82px;font-size:5.59px;color:#d0d0d0;-webkit-text-stroke:0.10px;transform:scaleX(1.111);transform-origin:left center;">Group Input</div>
<div class="t" style="right:1251.5px;top:576.89px;font-size:5.76px;color:#d8d8d8;-webkit-text-stroke:0.10px;transform:scaleX(1.111);transform-origin:right center;">Geometry</div>
<svg style="left:0;top:0" width="1" height="1"><circle cx="326.0" cy="579.0" r="2.3" fill="#00d6a3" stroke="#141414" stroke-width="0.6"/></svg>
<svg style="left:0;top:0" width="1" height="1"><circle cx="326.0" cy="591.0" r="2.5" fill="#2a2a2a" stroke="#6a6a6a" stroke-width="0.8"/></svg>
<div class="node" style="left:375.0px;top:553.7px;width:73.0px;height:50.0px;border-radius:2.5px"><div class="nh" style="height:10.0px;background:#1d725e;border-radius:2.5px 2.5px 0 0"></div></div>
<svg style="left:0;top:0" width="1" height="1"><path d="M380.8 557.8 L382.9 560.2 L385.1 557.8" fill="none" stroke="#e6e6e6" stroke-width="0.7647058823529412" stroke-linecap="round" stroke-linejoin="round"/></svg>
<div class="t" style="left:388.5px;top:556.27px;font-size:5.59px;color:#e6e6e6;-webkit-text-stroke:0.10px;transform:scaleX(1.111);transform-origin:left center;">Subdivide Mesh</div>
<div class="t" style="right:1129.5px;top:569.59px;font-size:5.76px;color:#d8d8d8;-webkit-text-stroke:0.10px;transform:scaleX(1.111);transform-origin:right center;">Mesh</div>
<svg style="left:0;top:0" width="1" height="1"><circle cx="448.0" cy="571.7" r="2.3" fill="#00d6a3" stroke="#141414" stroke-width="0.6"/></svg>
<div class="t" style="left:380.5px;top:582.59px;font-size:5.76px;color:#d8d8d8;-webkit-text-stroke:0.10px;transform:scaleX(1.111);transform-origin:left center;">Mesh</div>
<svg style="left:0;top:0" width="1" height="1"><circle cx="375.0" cy="584.7" r="2.3" fill="#00d6a3" stroke="#141414" stroke-width="0.6"/></svg>
<div class="fld" style="left:380.8px;top:592.8px;width:62.2px;height:8.2px;border-radius:2px"></div>
<div class="t" style="left:387.8px;top:594.79px;font-size:5.76px;color:#e6e6e6;-webkit-text-stroke:0.10px;transform:scaleX(1.111);transform-origin:left center;">Level</div>
<div class="t" style="right:1136.0px;top:594.79px;font-size:5.76px;color:#e6e6e6;-webkit-text-stroke:0.10px;transform:scaleX(1.111);transform-origin:right center;">4</div>
<svg style="left:0;top:0" width="1" height="1"><circle cx="375.0" cy="596.9" r="2.3" fill="#598c5c" stroke="#141414" stroke-width="0.6"/></svg>
<div class="node" style="left:565.8px;top:543.6px;width:73.0px;height:74.0px;border-radius:2.5px"><div class="nh" style="height:10.0px;background:#1d725e;border-radius:2.5px 2.5px 0 0"></div></div>
<svg style="left:0;top:0" width="1" height="1"><path d="M571.6 547.7 L573.7 550.1 L575.9 547.7" fill="none" stroke="#e6e6e6" stroke-width="0.7647058823529412" stroke-linecap="round" stroke-linejoin="round"/></svg>
<div class="t" style="left:579.3px;top:546.17px;font-size:5.59px;color:#e6e6e6;-webkit-text-stroke:0.10px;transform:scaleX(1.111);transform-origin:left center;">Set Position</div>
<div class="t" style="right:938.7px;top:559.89px;font-size:5.76px;color:#d8d8d8;-webkit-text-stroke:0.10px;transform:scaleX(1.111);transform-origin:right center;">Geometry</div>
<svg style="left:0;top:0" width="1" height="1"><circle cx="638.8" cy="562.0" r="2.3" fill="#00d6a3" stroke="#141414" stroke-width="0.6"/></svg>
<div class="t" style="left:571.3px;top:572.89px;font-size:5.76px;color:#d8d8d8;-webkit-text-stroke:0.10px;transform:scaleX(1.111);transform-origin:left center;">Geometry</div>
<svg style="left:0;top:0" width="1" height="1"><circle cx="565.8" cy="575.0" r="2.3" fill="#00d6a3" stroke="#141414" stroke-width="0.6"/></svg>
<div class="t" style="left:571.3px;top:584.19px;font-size:5.76px;color:#d8d8d8;-webkit-text-stroke:0.10px;transform:scaleX(1.111);transform-origin:left center;">Selection</div>
<svg style="left:0;top:0" width="1" height="1"><path d="M562.9 586.3 L565.8 583.4 L568.7 586.3 L565.8 589.2 Z" fill="#cca6d6" stroke="#141414" stroke-width="0.6"/><circle cx="565.8" cy="586.3" r="0.97" fill="#1a1a1a"/></svg>
<div class="t" style="left:571.3px;top:595.89px;font-size:5.76px;color:#d8d8d8;-webkit-text-stroke:0.10px;transform:scaleX(1.111);transform-origin:left center;">Position</div>
<svg style="left:0;top:0" width="1" height="1"><path d="M562.9 598.0 L565.8 595.1 L568.7 598.0 L565.8 600.9 Z" fill="#6363c7" stroke="#141414" stroke-width="0.6"/></svg>
<div class="t" style="left:571.3px;top:607.89px;font-size:5.76px;color:#d8d8d8;-webkit-text-stroke:0.10px;transform:scaleX(1.111);transform-origin:left center;">Offset</div>
<svg style="left:0;top:0" width="1" height="1"><path d="M562.9 610.0 L565.8 607.1 L568.7 610.0 L565.8 612.9 Z" fill="#6363c7" stroke="#141414" stroke-width="0.6"/></svg>
<div class="node" style="left:312.0px;top:647.6px;width:74.0px;height:160.0px;border-radius:2.5px"><div class="nh" style="height:10.0px;background:#79461d;border-radius:2.5px 2.5px 0 0"></div></div>
<svg style="left:0;top:0" width="1" height="1"><path d="M317.8 651.7 L319.9 654.1 L322.1 651.7" fill="none" stroke="#e6e6e6" stroke-width="0.7647058823529412" stroke-linecap="round" stroke-linejoin="round"/></svg>
<div class="t" style="left:325.5px;top:650.17px;font-size:5.59px;color:#e6e6e6;-webkit-text-stroke:0.10px;transform:scaleX(1.111);transform-origin:left center;">Noise Texture</div>
<div class="t" style="right:1191.5px;top:663.89px;font-size:5.76px;color:#d8d8d8;-webkit-text-stroke:0.10px;transform:scaleX(1.111);transform-origin:right center;">Fac</div>
<svg style="left:0;top:0" width="1" height="1"><path d="M383.1 666.0 L386.0 663.1 L388.9 666.0 L386.0 668.9 Z" fill="#a1a1a1" stroke="#141414" stroke-width="0.6"/></svg>
<div class="t" style="right:1191.5px;top:674.89px;font-size:5.76px;color:#d8d8d8;-webkit-text-stroke:0.10px;transform:scaleX(1.111);transform-origin:right center;">Color</div>
<svg style="left:0;top:0" width="1" height="1"><path d="M383.1 677.0 L386.0 674.1 L388.9 677.0 L386.0 679.9 Z" fill="#c7c729" stroke="#141414" stroke-width="0.6"/></svg>
<div class="dd" style="left:317.5px;top:687.0px;width:63.0px;height:10.0px;border-radius:2px;"></div>
<div class="t" style="left:321.0px;top:689.89px;font-size:5.76px;color:#e0e0e0;-webkit-text-stroke:0.10px;transform:scaleX(1.111);transform-origin:left center;">4D</div>
<svg style="left:0;top:0" width="1" height="1"><path d="M375.1 691.4 L376.5 693.0 L378.0 691.4" fill="none" stroke="#d0d0d0" stroke-width="0.822857142857143" stroke-linecap="round" stroke-linejoin="round"/></svg>
<div class="dd" style="left:317.5px;top:700.0px;width:63.0px;height:10.0px;border-radius:2px;"></div>
<div class="t" style="left:321.0px;top:702.89px;font-size:5.76px;color:#e0e0e0;-webkit-text-stroke:0.10px;transform:scaleX(1.111);transform-origin:left center;">fBM</div>
<svg style="left:0;top:0" width="1" height="1"><path d="M375.1 704.4 L376.5 706.0 L378.0 704.4" fill="none" stroke="#d0d0d0" stroke-width="0.822857142857143" stroke-linecap="round" stroke-linejoin="round"/></svg>
<div class="abs" style="left:317.5px;top:714.4px;width:7.2px;height:7.2px;background:#545454;border-radius:1.5px"></div>
<div class="t" style="left:326.8px;top:715.89px;font-size:5.76px;color:#d8d8d8;-webkit-text-stroke:0.10px;transform:scaleX(1.111);transform-origin:left center;">Normalize</div>
<div class="t" style="left:317.5px;top:727.69px;font-size:5.76px;color:#d8d8d8;-webkit-text-stroke:0.10px;transform:scaleX(1.111);transform-origin:left center;">Vector</div>
<svg style="left:0;top:0" width="1" height="1"><path d="M309.1 729.8 L312.0 726.9 L314.9 729.8 L312.0 732.7 Z" fill="#6363c7" stroke="#141414" stroke-width="0.6"/></svg>
<div class="t" style="left:317.5px;top:738.89px;font-size:5.76px;color:#d8d8d8;-webkit-text-stroke:0.10px;transform:scaleX(1.111);transform-origin:left center;">W</div>
<svg style="left:0;top:0" width="1" height="1"><path d="M309.1 741.0 L312.0 738.1 L314.9 741.0 L312.0 743.9 Z" fill="#a1a1a1" stroke="#141414" stroke-width="0.6"/><circle cx="312.0" cy="741.0" r="0.97" fill="#1a1a1a"/></svg>
<div class="fld" style="left:317.5px;top:748.8px;width:63.0px;height:8.8px;border-radius:2px"></div>
<div class="t" style="left:324.5px;top:751.09px;font-size:5.76px;color:#e6e6e6;-webkit-text-stroke:0.10px;transform:scaleX(1.111);transform-origin:left center;">Scale</div>
<div class="t" style="right:1198.5px;top:751.09px;font-size:5.76px;color:#e6e6e6;-webkit-text-stroke:0.10px;transform:scaleX(1.111);transform-origin:right center;">1.000</div>
<svg style="left:0;top:0" width="1" height="1"><path d="M309.1 753.2 L312.0 750.3 L314.9 753.2 L312.0 756.1 Z" fill="#a1a1a1" stroke="#141414" stroke-width="0.6"/><circle cx="312.0" cy="753.2" r="0.97" fill="#1a1a1a"/></svg>
<div class="fld" style="left:317.5px;top:760.5px;width:63.0px;height:8.8px;border-radius:2px"></div>
<div class="t" style="left:324.5px;top:762.74px;font-size:5.76px;color:#e6e6e6;-webkit-text-stroke:0.10px;transform:scaleX(1.111);transform-origin:left center;">Detail</div>
<div class="t" style="right:1198.5px;top:762.74px;font-size:5.76px;color:#e6e6e6;-webkit-text-stroke:0.10px;transform:scaleX(1.111);transform-origin:right center;">0.000</div>
<svg style="left:0;top:0" width="1" height="1"><path d="M309.1 764.9 L312.0 762.0 L314.9 764.9 L312.0 767.7 Z" fill="#a1a1a1" stroke="#141414" stroke-width="0.6"/><circle cx="312.0" cy="764.9" r="0.97" fill="#1a1a1a"/></svg>
<div class="fld" style="left:317.5px;top:772.1px;width:63.0px;height:8.8px;border-radius:2px"></div>
<div class="t" style="left:323.5px;top:774.39px;font-size:5.76px;color:#e6e6e6;-webkit-text-stroke:0.10px;transform:scaleX(1.111);transform-origin:left center;">Roughn...</div>
<div class="t" style="right:1197.5px;top:774.39px;font-size:5.76px;color:#e6e6e6;-webkit-text-stroke:0.10px;transform:scaleX(1.111);transform-origin:right center;">0.000</div>
<svg style="left:0;top:0" width="1" height="1"><path d="M309.1 776.5 L312.0 773.6 L314.9 776.5 L312.0 779.4 Z" fill="#a1a1a1" stroke="#141414" stroke-width="0.6"/><circle cx="312.0" cy="776.5" r="0.97" fill="#1a1a1a"/></svg>
<div class="fld" style="left:317.5px;top:783.8px;width:63.0px;height:8.8px;border-radius:2px"></div>
<div class="t" style="left:323.5px;top:786.04px;font-size:5.76px;color:#e6e6e6;-webkit-text-stroke:0.10px;transform:scaleX(1.111);transform-origin:left center;">Lacunarity</div>
<div class="t" style="right:1197.5px;top:786.04px;font-size:5.76px;color:#e6e6e6;-webkit-text-stroke:0.10px;transform:scaleX(1.111);transform-origin:right center;">0.000</div>
<svg style="left:0;top:0" width="1" height="1"><path d="M309.1 788.2 L312.0 785.3 L314.9 788.2 L312.0 791.0 Z" fill="#a1a1a1" stroke="#141414" stroke-width="0.6"/><circle cx="312.0" cy="788.2" r="0.97" fill="#1a1a1a"/></svg>
<div class="fld" style="left:317.5px;top:795.4px;width:63.0px;height:8.8px;border-radius:2px"></div>
<div class="t" style="left:323.5px;top:797.69px;font-size:5.76px;color:#e6e6e6;-webkit-text-stroke:0.10px;transform:scaleX(1.111);transform-origin:left center;">Distortion</div>
<div class="t" style="right:1197.5px;top:797.69px;font-size:5.76px;color:#e6e6e6;-webkit-text-stroke:0.10px;transform:scaleX(1.111);transform-origin:right center;">0.000</div>
<svg style="left:0;top:0" width="1" height="1"><path d="M309.1 799.8 L312.0 796.9 L314.9 799.8 L312.0 802.7 Z" fill="#a1a1a1" stroke="#141414" stroke-width="0.6"/><circle cx="312.0" cy="799.8" r="0.97" fill="#1a1a1a"/></svg>
<div class="node" style="left:195.8px;top:719.0px;width:74.0px;height:37.7px;border-radius:2.5px"><div class="nh" style="height:10.0px;background:#83314a;border-radius:2.5px 2.5px 0 0"></div></div>
<svg style="left:0;top:0" width="1" height="1"><path d="M201.6 723.1 L203.7 725.5 L205.9 723.1" fill="none" stroke="#e6e6e6" stroke-width="0.7647058823529412" stroke-linecap="round" stroke-linejoin="round"/></svg>
<div class="t" style="left:209.3px;top:721.57px;font-size:5.59px;color:#e6e6e6;-webkit-text-stroke:0.10px;transform:scaleX(1.111);transform-origin:left center;">Scene Time</div>
<div class="t" style="right:1307.7px;top:734.89px;font-size:5.76px;color:#d8d8d8;-webkit-text-stroke:0.10px;transform:scaleX(1.111);transform-origin:right center;">Seconds</div>
<svg style="left:0;top:0" width="1" height="1"><circle cx="269.8" cy="737.0" r="2.3" fill="#a1a1a1" stroke="#141414" stroke-width="0.6"/></svg>
<div class="t" style="right:1307.7px;top:746.69px;font-size:5.76px;color:#d8d8d8;-webkit-text-stroke:0.10px;transform:scaleX(1.111);transform-origin:right center;">Frame</div>
<svg style="left:0;top:0" width="1" height="1"><circle cx="269.8" cy="748.8" r="2.3" fill="#a1a1a1" stroke="#141414" stroke-width="0.6"/></svg>
<div class="node" style="left:433.0px;top:638.0px;width:73.0px;height:97.5px;border-radius:2.6px"><div class="nh" style="height:10.4px;background:#3c3c83;border-radius:2.6px 2.6px 0 0"></div></div>
<svg style="left:0;top:0" width="1" height="1"><path d="M439.0 642.2 L441.3 644.8 L443.5 642.2" fill="none" stroke="#e6e6e6" stroke-width="0.7952941176470589" stroke-linecap="round" stroke-linejoin="round"/></svg>
<div class="t" style="left:447.1px;top:641.17px;font-size:5.59px;color:#e6e6e6;-webkit-text-stroke:0.10px;transform:scaleX(1.111);transform-origin:left center;">Multiply</div>
<div class="t" style="right:1071.5px;top:653.69px;font-size:5.76px;color:#d8d8d8;-webkit-text-stroke:0.10px;transform:scaleX(1.111);transform-origin:right center;">Vector</div>
<svg style="left:0;top:0" width="1" height="1"><path d="M503.1 655.8 L506.0 652.9 L508.9 655.8 L506.0 658.7 Z" fill="#6363c7" stroke="#141414" stroke-width="0.6"/></svg>
<div class="dd" style="left:438.7px;top:666.3px;width:61.6px;height:10.0px;border-radius:2px;"></div>
<div class="t" style="left:442.2px;top:669.19px;font-size:5.76px;color:#e0e0e0;-webkit-text-stroke:0.10px;transform:scaleX(1.111);transform-origin:left center;">Multiply</div>
<svg style="left:0;top:0" width="1" height="1"><path d="M494.9 670.7 L496.3 672.3 L497.8 670.7" fill="none" stroke="#d0d0d0" stroke-width="0.822857142857143" stroke-linecap="round" stroke-linejoin="round"/></svg>
<div class="t" style="left:438.5px;top:680.89px;font-size:5.76px;color:#d8d8d8;-webkit-text-stroke:0.10px;transform:scaleX(1.111);transform-origin:left center;">Vector</div>
<svg style="left:0;top:0" width="1" height="1"><path d="M430.1 683.0 L433.0 680.1 L435.9 683.0 L433.0 685.9 Z" fill="#6363c7" stroke="#141414" stroke-width="0.6"/></svg>
<div class="t" style="left:438.5px;top:692.89px;font-size:5.76px;color:#d8d8d8;-webkit-text-stroke:0.10px;transform:scaleX(1.111);transform-origin:left center;">Vector:</div>
<svg style="left:0;top:0" width="1" height="1"><path d="M430.1 695.0 L433.0 692.1 L435.9 695.0 L433.0 697.9 Z" fill="#6363c7" stroke="#141414" stroke-width="0.6"/><circle cx="433.0" cy="695.0" r="0.97" fill="#1a1a1a"/></svg>
<div class="abs" style="left:438.7px;top:700.7px;width:61.6px;height:30.7px;background:#545454;border-radius:2px"></div>
<div class="abs" style="left:438.7px;top:710.4px;width:61.6px;height:0.8px;background:#3a3a3a;"></div>
<div class="abs" style="left:438.7px;top:720.8px;width:61.6px;height:0.8px;background:#3a3a3a;"></div>
<div class="t" style="left:438.7px;width:61.6px;text-align:center;top:703.49px;font-size:5.76px;color:#e6e6e6;-webkit-text-stroke:0.10px;transform:scaleX(1.111);transform-origin:center center">10.000</div>
<div class="t" style="left:438.7px;width:61.6px;text-align:center;top:713.89px;font-size:5.76px;color:#e6e6e6;-webkit-text-stroke:0.10px;transform:scaleX(1.111);transform-origin:center center">47.300</div>
<div class="t" style="left:438.7px;width:61.6px;text-align:center;top:724.29px;font-size:5.76px;color:#e6e6e6;-webkit-text-stroke:0.10px;transform:scaleX(1.111);transform-origin:center center">10.000</div>
<div class="node" style="left:519.0px;top:760.7px;width:74.2px;height:62.7px;border-radius:2.5px"><div class="nh" style="height:10.0px;background:#246283;border-radius:2.5px 2.5px 0 0"></div></div>
<svg style="left:0;top:0" width="1" height="1"><path d="M524.8 764.8 L526.9 767.2 L529.1 764.8" fill="none" stroke="#e6e6e6" stroke-width="0.7647058823529412" stroke-linecap="round" stroke-linejoin="round"/></svg>
<div class="t" style="left:532.5px;top:763.27px;font-size:5.59px;color:#e6e6e6;-webkit-text-stroke:0.10px;transform:scaleX(1.111);transform-origin:left center;">Index of Nearest</div>
<div class="t" style="right:984.3px;top:776.89px;font-size:5.76px;color:#d8d8d8;-webkit-text-stroke:0.10px;transform:scaleX(1.111);transform-origin:right center;">Index</div>
<svg style="left:0;top:0" width="1" height="1"><path d="M590.3 779.0 L593.2 776.1 L596.1 779.0 L593.2 781.9 Z" fill="#598c5c" stroke="#141414" stroke-width="0.6"/></svg>
<div class="t" style="right:984.3px;top:788.89px;font-size:5.76px;color:#d8d8d8;-webkit-text-stroke:0.10px;transform:scaleX(1.111);transform-origin:right center;">Has Neighbor</div>
<svg style="left:0;top:0" width="1" height="1"><path d="M590.3 791.0 L593.2 788.1 L596.1 791.0 L593.2 793.9 Z" fill="#cca6d6" stroke="#141414" stroke-width="0.6"/></svg>
<div class="t" style="left:524.5px;top:801.89px;font-size:5.76px;color:#d8d8d8;-webkit-text-stroke:0.10px;transform:scaleX(1.111);transform-origin:left center;">Position</div>
<svg style="left:0;top:0" width="1" height="1"><path d="M516.1 804.0 L519.0 801.1 L521.9 804.0 L519.0 806.9 Z" fill="#6363c7" stroke="#141414" stroke-width="0.6"/></svg>
<div class="t" style="left:524.5px;top:813.89px;font-size:5.76px;color:#d8d8d8;-webkit-text-stroke:0.10px;transform:scaleX(1.111);transform-origin:left center;">Group ID</div>
<svg style="left:0;top:0" width="1" height="1"><path d="M516.1 816.0 L519.0 813.1 L521.9 816.0 L519.0 818.9 Z" fill="#598c5c" stroke="#141414" stroke-width="0.6"/><circle cx="519.0" cy="816.0" r="0.97" fill="#1a1a1a"/></svg>
<div class="node" style="left:633.3px;top:758.8px;width:73.7px;height:75.7px;border-radius:2.5px"><div class="nh" style="height:10.0px;background:#246283;border-radius:2.5px 2.5px 0 0"></div></div>
<svg style="left:0;top:0" width="1" height="1"><path d="M639.1 762.9 L641.2 765.3 L643.4 762.9" fill="none" stroke="#e6e6e6" stroke-width="0.7647058823529412" stroke-linecap="round" stroke-linejoin="round"/></svg>
<div class="t" style="left:646.8px;top:761.37px;font-size:5.59px;color:#e6e6e6;-webkit-text-stroke:0.10px;transform:scaleX(1.111);transform-origin:left center;">Evaluate at Index</div>
<div class="t" style="right:870.5px;top:774.49px;font-size:5.76px;color:#d8d8d8;-webkit-text-stroke:0.10px;transform:scaleX(1.111);transform-origin:right center;">Value</div>
<svg style="left:0;top:0" width="1" height="1"><path d="M704.1 776.6 L707.0 773.7 L709.9 776.6 L707.0 779.5 Z" fill="#6363c7" stroke="#141414" stroke-width="0.6"/></svg>
<div class="dd" style="left:638.7px;top:785.7px;width:63.0px;height:10.0px;border-radius:2px;"></div>
<div class="t" style="left:642.2px;top:788.59px;font-size:5.76px;color:#e0e0e0;-webkit-text-stroke:0.10px;transform:scaleX(1.111);transform-origin:left center;">Vector</div>
<svg style="left:0;top:0" width="1" height="1"><path d="M696.3 790.1 L697.7 791.7 L699.2 790.1" fill="none" stroke="#d0d0d0" stroke-width="0.822857142857143" stroke-linecap="round" stroke-linejoin="round"/></svg>
<div class="dd" style="left:638.7px;top:799.1px;width:63.0px;height:10.0px;border-radius:2px;"></div>
<div class="t" style="left:642.2px;top:801.99px;font-size:5.76px;color:#e0e0e0;-webkit-text-stroke:0.10px;transform:scaleX(1.111);transform-origin:left center;">Point</div>
<svg style="left:0;top:0" width="1" height="1"><path d="M696.3 803.5 L697.7 805.1 L699.2 803.5" fill="none" stroke="#d0d0d0" stroke-width="0.822857142857143" stroke-linecap="round" stroke-linejoin="round"/></svg>
<div class="t" style="left:638.8px;top:813.59px;font-size:5.76px;color:#d8d8d8;-webkit-text-stroke:0.10px;transform:scaleX(1.111);transform-origin:left center;">Index</div>
<svg style="left:0;top:0" width="1" height="1"><path d="M630.4 815.7 L633.3 812.8 L636.2 815.7 L633.3 818.6 Z" fill="#598c5c" stroke="#141414" stroke-width="0.6"/></svg>
<div class="t" style="left:638.8px;top:825.39px;font-size:5.76px;color:#d8d8d8;-webkit-text-stroke:0.10px;transform:scaleX(1.111);transform-origin:left center;">Value</div>
<svg style="left:0;top:0" width="1" height="1"><path d="M630.4 827.5 L633.3 824.6 L636.2 827.5 L633.3 830.4 Z" fill="#6363c7" stroke="#141414" stroke-width="0.6"/></svg>
<div class="node" style="left:747.0px;top:760.7px;width:73.0px;height:64.9px;border-radius:2.5px"><div class="nh" style="height:10.0px;background:#3c3c83;border-radius:2.5px 2.5px 0 0"></div></div>
<svg style="left:0;top:0" width="1" height="1"><path d="M752.8 764.8 L754.9 767.2 L757.1 764.8" fill="none" stroke="#e6e6e6" stroke-width="0.7647058823529412" stroke-linecap="round" stroke-linejoin="round"/></svg>
<div class="t" style="left:760.5px;top:763.27px;font-size:5.59px;color:#e6e6e6;-webkit-text-stroke:0.10px;transform:scaleX(1.111);transform-origin:left center;">Distance</div>
<div class="t" style="right:757.5px;top:776.89px;font-size:5.76px;color:#d8d8d8;-webkit-text-stroke:0.10px;transform:scaleX(1.111);transform-origin:right center;">Value</div>
<svg style="left:0;top:0" width="1" height="1"><path d="M817.1 779.0 L820.0 776.1 L822.9 779.0 L820.0 781.9 Z" fill="#a1a1a1" stroke="#141414" stroke-width="0.6"/></svg>
<div class="dd" style="left:752.5px;top:788.2px;width:62.5px;height:10.0px;border-radius:2px;"></div>
<div class="t" style="left:756.0px;top:791.09px;font-size:5.76px;color:#e0e0e0;-webkit-text-stroke:0.10px;transform:scaleX(1.111);transform-origin:left center;">Distance</div>
<svg style="left:0;top:0" width="1" height="1"><path d="M809.6 792.6 L811.0 794.2 L812.5 792.6" fill="none" stroke="#d0d0d0" stroke-width="0.822857142857143" stroke-linecap="round" stroke-linejoin="round"/></svg>
<div class="t" style="left:752.5px;top:802.89px;font-size:5.76px;color:#d8d8d8;-webkit-text-stroke:0.10px;transform:scaleX(1.111);transform-origin:left center;">Vector</div>
<svg style="left:0;top:0" width="1" height="1"><path d="M744.1 805.0 L747.0 802.1 L749.9 805.0 L747.0 807.9 Z" fill="#6363c7" stroke="#141414" stroke-width="0.6"/></svg>
<div class="t" style="left:752.5px;top:814.89px;font-size:5.76px;color:#d8d8d8;-webkit-text-stroke:0.10px;transform:scaleX(1.111);transform-origin:left center;">Vector</div>
<svg style="left:0;top:0" width="1" height="1"><path d="M744.1 817.0 L747.0 814.1 L749.9 817.0 L747.0 819.9 Z" fill="#6363c7" stroke="#141414" stroke-width="0.6"/></svg>
<div class="node" style="left:847.0px;top:735.0px;width:74.0px;height:77.0px;border-radius:2.5px"><div class="nh" style="height:10.0px;background:#246283;border-radius:2.5px 2.5px 0 0"></div></div>
<svg style="left:0;top:0" width="1" height="1"><path d="M852.8 739.1 L854.9 741.5 L857.1 739.1" fill="none" stroke="#e6e6e6" stroke-width="0.7647058823529412" stroke-linecap="round" stroke-linejoin="round"/></svg>
<div class="t" style="left:860.5px;top:737.57px;font-size:5.59px;color:#e6e6e6;-webkit-text-stroke:0.10px;transform:scaleX(1.111);transform-origin:left center;">Divide</div>
<div class="t" style="right:656.5px;top:750.69px;font-size:5.76px;color:#d8d8d8;-webkit-text-stroke:0.10px;transform:scaleX(1.111);transform-origin:right center;">Value</div>
<svg style="left:0;top:0" width="1" height="1"><path d="M918.1 752.8 L921.0 749.9 L923.9 752.8 L921.0 755.7 Z" fill="#a1a1a1" stroke="#141414" stroke-width="0.6"/></svg>
<div class="dd" style="left:852.5px;top:762.4px;width:63.0px;height:10.0px;border-radius:2px;"></div>
<div class="t" style="left:856.0px;top:765.29px;font-size:5.76px;color:#e0e0e0;-webkit-text-stroke:0.10px;transform:scaleX(1.111);transform-origin:left center;">Divide</div>
<svg style="left:0;top:0" width="1" height="1"><path d="M910.1 766.8 L911.5 768.4 L913.0 766.8" fill="none" stroke="#d0d0d0" stroke-width="0.822857142857143" stroke-linecap="round" stroke-linejoin="round"/></svg>
<div class="abs" style="left:852.5px;top:776.4px;width:7.2px;height:7.2px;background:#545454;border-radius:1.5px"></div>
<div class="t" style="left:861.8px;top:777.89px;font-size:5.76px;color:#d8d8d8;-webkit-text-stroke:0.10px;transform:scaleX(1.111);transform-origin:left center;">Clamp</div>
<div class="t" style="left:852.5px;top:789.89px;font-size:5.76px;color:#d8d8d8;-webkit-text-stroke:0.10px;transform:scaleX(1.111);transform-origin:left center;">Value</div>
<svg style="left:0;top:0" width="1" height="1"><path d="M844.1 792.0 L847.0 789.1 L849.9 792.0 L847.0 794.9 Z" fill="#a1a1a1" stroke="#141414" stroke-width="0.6"/></svg>
<div class="fld" style="left:852.5px;top:799.5px;width:63.0px;height:8.6px;border-radius:2px"></div>
<div class="t" style="left:860.0px;top:801.69px;font-size:5.76px;color:#e6e6e6;-webkit-text-stroke:0.10px;transform:scaleX(1.111);transform-origin:left center;">Value</div>
<div class="t" style="right:664.0px;top:801.69px;font-size:5.76px;color:#e6e6e6;-webkit-text-stroke:0.10px;transform:scaleX(1.111);transform-origin:right center;">2.000</div>
<svg style="left:0;top:0" width="1" height="1"><path d="M844.1 803.8 L847.0 800.9 L849.9 803.8 L847.0 806.7 Z" fill="#a1a1a1" stroke="#141414" stroke-width="0.6"/><circle cx="847.0" cy="803.8" r="0.97" fill="#1a1a1a"/></svg>
<div class="node" style="left:539.4px;top:846.6px;width:73.8px;height:25.4px;border-radius:2.5px"><div class="nh" style="height:10.0px;background:#83314a;border-radius:2.5px 2.5px 0 0"></div></div>
<svg style="left:0;top:0" width="1" height="1"><path d="M545.2 850.7 L547.3 853.1 L549.5 850.7" fill="none" stroke="#e6e6e6" stroke-width="0.7647058823529412" stroke-linecap="round" stroke-linejoin="round"/></svg>
<div class="t" style="left:552.9px;top:849.17px;font-size:5.59px;color:#e6e6e6;-webkit-text-stroke:0.10px;transform:scaleX(1.111);transform-origin:left center;">Position</div>
<div class="t" style="right:964.3px;top:862.59px;font-size:5.76px;color:#d8d8d8;-webkit-text-stroke:0.10px;transform:scaleX(1.111);transform-origin:right center;">Position</div>
<svg style="left:0;top:0" width="1" height="1"><path d="M610.3 864.7 L613.2 861.8 L616.1 864.7 L613.2 867.6 Z" fill="#6363c7" stroke="#141414" stroke-width="0.6"/></svg>
<div class="node" style="left:787.2px;top:621.9px;width:73.8px;height:73.6px;border-radius:2.6px"><div class="nh" style="height:10.3px;background:#1d725e;border-radius:2.6px 2.6px 0 0"></div></div>
<svg style="left:0;top:0" width="1" height="1"><path d="M793.1 626.1 L795.4 628.6 L797.6 626.1" fill="none" stroke="#e6e6e6" stroke-width="0.7876470588235295" stroke-linecap="round" stroke-linejoin="round"/></svg>
<div class="t" style="left:801.1px;top:625.02px;font-size:5.59px;color:#e6e6e6;-webkit-text-stroke:0.10px;transform:scaleX(1.111);transform-origin:left center;">UV Sphere</div>
<div class="t" style="right:716.5px;top:637.69px;font-size:5.76px;color:#d8d8d8;-webkit-text-stroke:0.10px;transform:scaleX(1.111);transform-origin:right center;">Mesh</div>
<svg style="left:0;top:0" width="1" height="1"><circle cx="861.0" cy="639.8" r="2.3" fill="#00d6a3" stroke="#141414" stroke-width="0.6"/></svg>
<div class="t" style="right:716.5px;top:649.79px;font-size:5.76px;color:#d8d8d8;-webkit-text-stroke:0.10px;transform:scaleX(1.111);transform-origin:right center;">UV Map</div>
<svg style="left:0;top:0" width="1" height="1"><path d="M858.1 651.9 L861.0 649.0 L863.9 651.9 L861.0 654.8 Z" fill="#6363c7" stroke="#141414" stroke-width="0.6"/></svg>
<div class="fld" style="left:792.8px;top:660.4px;width:62.6px;height:9.3px;border-radius:2px"></div>
<div class="t" style="left:800.3px;top:662.89px;font-size:5.76px;color:#e6e6e6;-webkit-text-stroke:0.10px;transform:scaleX(1.111);transform-origin:left center;">Segments</div>
<div class="t" style="right:724.1px;top:662.89px;font-size:5.76px;color:#e6e6e6;-webkit-text-stroke:0.10px;transform:scaleX(1.111);transform-origin:right center;">32</div>
<svg style="left:0;top:0" width="1" height="1"><circle cx="787.2" cy="665.0" r="2.3" fill="#598c5c" stroke="#141414" stroke-width="0.6"/></svg>
<div class="fld" style="left:792.8px;top:672.4px;width:62.6px;height:9.3px;border-radius:2px"></div>
<div class="t" style="left:800.3px;top:674.89px;font-size:5.76px;color:#e6e6e6;-webkit-text-stroke:0.10px;transform:scaleX(1.111);transform-origin:left center;">Rings</div>
<div class="t" style="right:724.1px;top:674.89px;font-size:5.76px;color:#e6e6e6;-webkit-text-stroke:0.10px;transform:scaleX(1.111);transform-origin:right center;">16</div>
<svg style="left:0;top:0" width="1" height="1"><circle cx="787.2" cy="677.0" r="2.3" fill="#598c5c" stroke="#141414" stroke-width="0.6"/></svg>
<div class="fld" style="left:792.8px;top:683.6px;width:62.6px;height:9.3px;border-radius:2px"></div>
<div class="t" style="left:800.3px;top:686.19px;font-size:5.76px;color:#e6e6e6;-webkit-text-stroke:0.10px;transform:scaleX(1.111);transform-origin:left center;">Radius</div>
<div class="t" style="right:724.1px;top:686.19px;font-size:5.76px;color:#e6e6e6;-webkit-text-stroke:0.10px;transform:scaleX(1.111);transform-origin:right center;">1 m</div>
<svg style="left:0;top:0" width="1" height="1"><circle cx="787.2" cy="688.3" r="2.3" fill="#a1a1a1" stroke="#141414" stroke-width="0.6"/></svg>
<div class="node" style="left:1011.7px;top:528.8px;width:73.3px;height:141.1px;border-radius:2.5px"><div class="nh" style="height:10.0px;background:#1d725e;border-radius:2.5px 2.5px 0 0"></div></div>
<svg style="left:0;top:0" width="1" height="1"><path d="M1017.5 532.9 L1019.6 535.3 L1021.8 532.9" fill="none" stroke="#e6e6e6" stroke-width="0.7647058823529412" stroke-linecap="round" stroke-linejoin="round"/></svg>
<div class="t" style="left:1025.2px;top:531.37px;font-size:5.59px;color:#e6e6e6;-webkit-text-stroke:0.10px;transform:scaleX(1.111);transform-origin:left center;">Instance on Points</div>
<div class="t" style="right:492.5px;top:544.79px;font-size:5.76px;color:#d8d8d8;-webkit-text-stroke:0.10px;transform:scaleX(1.111);transform-origin:right center;">Instances</div>
<svg style="left:0;top:0" width="1" height="1"><circle cx="1085.0" cy="546.9" r="2.3" fill="#00d6a3" stroke="#141414" stroke-width="0.6"/></svg>
<div class="t" style="left:1017.2px;top:557.89px;font-size:5.76px;color:#d8d8d8;-webkit-text-stroke:0.10px;transform:scaleX(1.111);transform-origin:left center;">Points</div>
<svg style="left:0;top:0" width="1" height="1"><circle cx="1011.7" cy="560.0" r="2.3" fill="#00d6a3" stroke="#141414" stroke-width="0.6"/></svg>
<div class="t" style="left:1017.2px;top:569.89px;font-size:5.76px;color:#d8d8d8;-webkit-text-stroke:0.10px;transform:scaleX(1.111);transform-origin:left center;">Selection</div>
<svg style="left:0;top:0" width="1" height="1"><path d="M1008.8 572.0 L1011.7 569.1 L1014.6 572.0 L1011.7 574.9 Z" fill="#cca6d6" stroke="#141414" stroke-width="0.6"/><circle cx="1011.7" cy="572.0" r="0.97" fill="#1a1a1a"/></svg>
<div class="t" style="left:1017.2px;top:581.19px;font-size:5.76px;color:#d8d8d8;-webkit-text-stroke:0.10px;transform:scaleX(1.111);transform-origin:left center;">Instance</div>
<svg style="left:0;top:0" width="1" height="1"><circle cx="1011.7" cy="583.3" r="2.3" fill="#00d6a3" stroke="#141414" stroke-width="0.6"/></svg>
<svg style="left:0;top:0" width="1" height="1"><path d="M1008.8 595.0 L1011.7 592.1 L1014.6 595.0 L1011.7 597.9 Z" fill="#cca6d6" stroke="#141414" stroke-width="0.6"/><circle cx="1011.7" cy="595.0" r="0.97" fill="#1a1a1a"/></svg>
<div class="abs" style="left:1017.7px;top:591.4px;width:7.2px;height:7.2px;background:#545454;border-radius:1.5px"></div>
<div class="t" style="left:1027.0px;top:592.89px;font-size:5.76px;color:#d8d8d8;-webkit-text-stroke:0.10px;transform:scaleX(1.111);transform-origin:left center;">Pick Instance</div>
<div class="t" style="left:1017.2px;top:604.89px;font-size:5.76px;color:#d8d8d8;-webkit-text-stroke:0.10px;transform:scaleX(1.111);transform-origin:left center;">Instance Index</div>
<svg style="left:0;top:0" width="1" height="1"><path d="M1008.8 607.0 L1011.7 604.1 L1014.6 607.0 L1011.7 609.9 Z" fill="#598c5c" stroke="#141414" stroke-width="0.6"/></svg>
<div class="t" style="left:1017.2px;top:615.89px;font-size:5.76px;color:#d8d8d8;-webkit-text-stroke:0.10px;transform:scaleX(1.111);transform-origin:left center;">Rotation:</div>
<svg style="left:0;top:0" width="1" height="1"><path d="M1008.8 618.0 L1011.7 615.1 L1014.6 618.0 L1011.7 620.9 Z" fill="#a663c7" stroke="#141414" stroke-width="0.6"/><circle cx="1011.7" cy="618.0" r="0.97" fill="#1a1a1a"/></svg>
<div class="abs" style="left:1017.7px;top:624.6px;width:61.7px;height:30.0px;background:#545454;border-radius:2px"></div>
<div class="abs" style="left:1017.7px;top:634.2px;width:61.7px;height:0.8px;background:#3a3a3a;"></div>
<div class="abs" style="left:1017.7px;top:644.4px;width:61.7px;height:0.8px;background:#3a3a3a;"></div>
<div class="t" style="left:1026.0px;top:627.19px;font-size:5.76px;color:#e6e6e6;-webkit-text-stroke:0.10px;transform:scaleX(1.111);transform-origin:left center;">X</div>
<div class="t" style="right:500.0px;top:627.19px;font-size:5.76px;color:#e6e6e6;-webkit-text-stroke:0.10px;transform:scaleX(1.111);transform-origin:right center;">0°</div>
<div class="t" style="left:1026.0px;top:637.49px;font-size:5.76px;color:#e6e6e6;-webkit-text-stroke:0.10px;transform:scaleX(1.111);transform-origin:left center;">Y</div>
<div class="t" style="right:500.0px;top:637.49px;font-size:5.76px;color:#e6e6e6;-webkit-text-stroke:0.10px;transform:scaleX(1.111);transform-origin:right center;">0°</div>
<div class="t" style="left:1026.0px;top:647.89px;font-size:5.76px;color:#e6e6e6;-webkit-text-stroke:0.10px;transform:scaleX(1.111);transform-origin:left center;">Z</div>
<div class="t" style="right:500.0px;top:647.89px;font-size:5.76px;color:#e6e6e6;-webkit-text-stroke:0.10px;transform:scaleX(1.111);transform-origin:right center;">0°</div>
<div class="t" style="left:1017.2px;top:660.19px;font-size:5.76px;color:#d8d8d8;-webkit-text-stroke:0.10px;transform:scaleX(1.111);transform-origin:left center;">Scale</div>
<svg style="left:0;top:0" width="1" height="1"><path d="M1008.8 662.3 L1011.7 659.4 L1014.6 662.3 L1011.7 665.2 Z" fill="#6363c7" stroke="#141414" stroke-width="0.6"/></svg>
<div class="node" style="left:1158.0px;top:564.0px;width:72.9px;height:62.2px;border-radius:2.5px"><div class="nh" style="height:10.0px;background:#1d725e;border-radius:2.5px 2.5px 0 0"></div></div>
<svg style="left:0;top:0" width="1" height="1"><path d="M1163.8 568.1 L1165.9 570.5 L1168.1 568.1" fill="none" stroke="#e6e6e6" stroke-width="0.7647058823529412" stroke-linecap="round" stroke-linejoin="round"/></svg>
<div class="t" style="left:1171.5px;top:566.57px;font-size:5.59px;color:#e6e6e6;-webkit-text-stroke:0.10px;transform:scaleX(1.111);transform-origin:left center;">Set Material</div>
<div class="t" style="right:346.6px;top:579.89px;font-size:5.76px;color:#d8d8d8;-webkit-text-stroke:0.10px;transform:scaleX(1.111);transform-origin:right center;">Geometry</div>
<svg style="left:0;top:0" width="1" height="1"><circle cx="1230.9" cy="582.0" r="2.3" fill="#00d6a3" stroke="#141414" stroke-width="0.6"/></svg>
<div class="t" style="left:1163.5px;top:592.89px;font-size:5.76px;color:#d8d8d8;-webkit-text-stroke:0.10px;transform:scaleX(1.111);transform-origin:left center;">Geometry</div>
<svg style="left:0;top:0" width="1" height="1"><circle cx="1158.0" cy="595.0" r="2.3" fill="#00d6a3" stroke="#141414" stroke-width="0.6"/></svg>
<div class="t" style="left:1163.5px;top:604.89px;font-size:5.76px;color:#d8d8d8;-webkit-text-stroke:0.10px;transform:scaleX(1.111);transform-origin:left center;">Selection</div>
<svg style="left:0;top:0" width="1" height="1"><path d="M1155.1 607.0 L1158.0 604.1 L1160.9 607.0 L1158.0 609.9 Z" fill="#cca6d6" stroke="#141414" stroke-width="0.6"/><circle cx="1158.0" cy="607.0" r="0.97" fill="#1a1a1a"/></svg>
<svg style="left:0;top:0" width="1" height="1"><circle cx="1158.0" cy="618.2" r="2.3" fill="#eb7582" stroke="#141414" stroke-width="0.6"/></svg>
<div class="abs" style="left:1163.6px;top:613.6px;width:61.3px;height:9.3px;background:#282828;border:0.7px solid #444;border-radius:2px"></div>
<svg style="left:0;top:0" width="1" height="1"><circle cx="1169.3" cy="618.3" r="3.0" fill="#282828" stroke="#e6e6e6" stroke-width="1.3"/><path d="M1169.3 618.3 L1169.3 615.3 A3.0 3.0 0 0 0 1166.3 618.3 Z" fill="#e6e6e6"/><path d="M1169.3 618.3 L1169.3 621.3 A3.0 3.0 0 0 0 1172.3 618.3 Z" fill="#e6e6e6"/></svg>
<div class="t" style="left:1176.5px;top:616.41px;font-size:5.31px;color:#e6e6e6;-webkit-text-stroke:0.09px;transform:scaleX(1.111);transform-origin:left center;">Material.001</div>
<svg style="left:0;top:0" width="1" height="1"><path d="M1217.4 617.3000000000001 L1220.0 619.9 M1220.0 617.3000000000001 L1217.4 619.9" stroke="#b8b8b8" stroke-width="0.7" stroke-linecap="round"/></svg>
<div class="node" style="left:1309.8px;top:596.0px;width:73.4px;height:37.4px;border-radius:2.5px"><div class="nh" style="height:10.2px;background:#1b1b1b;border-radius:2.5px 2.5px 0 0"></div></div>
<svg style="left:0;top:0" width="1" height="1"><path d="M1315.7 600.2 L1317.9 602.6 L1320.1 600.2" fill="none" stroke="#d0d0d0" stroke-width="0.78" stroke-linecap="round" stroke-linejoin="round"/></svg>
<div class="t" style="left:1323.6px;top:599.07px;font-size:5.59px;color:#d0d0d0;-webkit-text-stroke:0.10px;transform:scaleX(1.111);transform-origin:left center;">Group Output</div>
<div class="t" style="left:1315.3px;top:612.09px;font-size:5.76px;color:#d8d8d8;-webkit-text-stroke:0.10px;transform:scaleX(1.111);transform-origin:left center;">Geometry</div>
<svg style="left:0;top:0" width="1" height="1"><circle cx="1309.8" cy="614.2" r="2.3" fill="#00d6a3" stroke="#141414" stroke-width="0.6"/></svg>
<svg style="left:0;top:0" width="1" height="1"><circle cx="1309.8" cy="626.2" r="2.5" fill="#2a2a2a" stroke="#6a6a6a" stroke-width="0.8"/></svg>
</div></body></html>
